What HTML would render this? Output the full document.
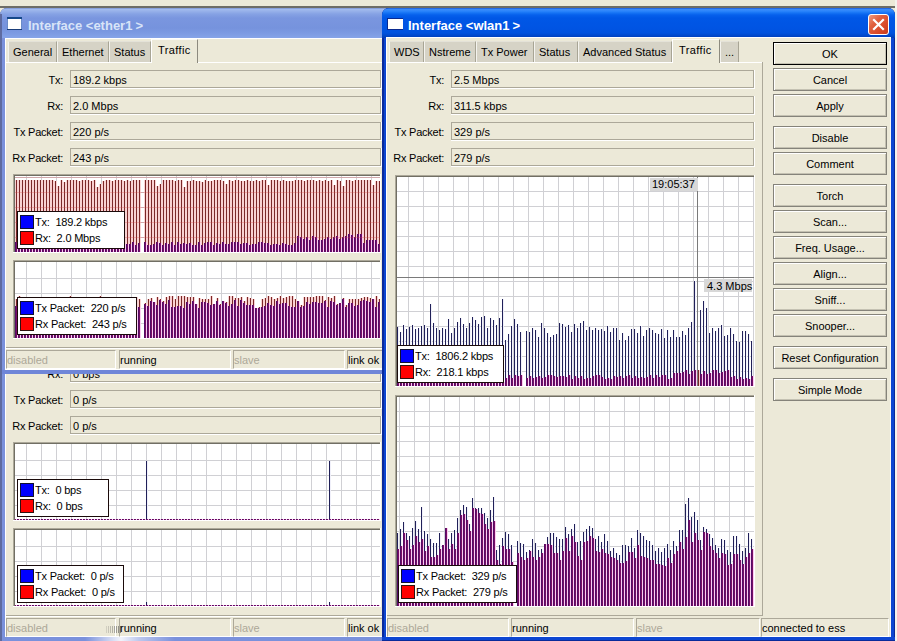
<!DOCTYPE html><html><head><meta charset="utf-8"><style>html,body{margin:0;padding:0;width:897px;height:641px;overflow:hidden;background:#ECE9D8;position:relative}</style></head><body><div style="position:absolute;left:0;top:0;width:897px;height:6px;background:#ECE9D8"></div>
<div style="position:absolute;left:0;top:6px;width:895px;height:2px;background:#6E6D66"></div>
<div style="position:absolute;left:895px;top:0;width:2px;height:641px;background:#F4F3EE"></div>
<div style="position:absolute;left:0px;top:276px;width:400px;height:365px;background:#7A91DC;border-radius:7px 7px 0 0;box-shadow:inset 2px 0 0 #5E6BA0, inset -1px 0 0 #5E6BA0, inset 0 -1px 0 #5E6BA0;"></div>
<div style="position:absolute;left:0px;top:276px;width:400px;height:30px;background:linear-gradient(to bottom,#6C84C8 0px,#A4BCEE 1px,#98B2EA 3px,#86A2E4 6px,#7A96DF 10px,#7693DD 20px,#7C9AE2 25px,#86A4E8 30px);border-radius:7px 7px 0 0;"></div>
<div style="position:absolute;left:5px;top:306px;width:395px;height:335px;background:#ECE9D8;"></div>
<div style="position:absolute;left:5px;top:306px;width:1px;height:335px;background:#FFFFFF;"></div>
<div style="position:absolute;left:2px;top:637px;width:400px;height:4px;background:#7A91DC;"></div>
<div style="position:absolute;left:5px;top:636px;width:395px;height:1px;background:#FFFFFF;"></div>
<div style="position:absolute;left:85px;top:636px;width:90px;height:5px;background:linear-gradient(to right,rgba(255,255,255,0) 0%,rgba(255,255,255,0.9) 40%,rgba(255,255,255,0.5) 60%,rgba(255,255,255,0) 100%);"></div>
<div style="position:absolute;left:106px;top:626px;width:1px;height:7px;background:rgba(60,60,60,0.15);"></div>
<div style="position:absolute;left:108px;top:626px;width:1px;height:7px;background:rgba(60,60,60,0.21);"></div>
<div style="position:absolute;left:110px;top:626px;width:1px;height:7px;background:rgba(60,60,60,0.27);"></div>
<div style="position:absolute;left:112px;top:626px;width:1px;height:7px;background:rgba(60,60,60,0.32999999999999996);"></div>
<div style="position:absolute;left:114px;top:626px;width:1px;height:7px;background:rgba(60,60,60,0.39);"></div>
<div style="position:absolute;left:116px;top:626px;width:1px;height:7px;background:rgba(60,60,60,0.44999999999999996);"></div>
<div style="position:absolute;left:118px;top:626px;width:1px;height:7px;background:rgba(60,60,60,0.51);"></div>
<div style="position:absolute;left:120px;top:626px;width:1px;height:7px;background:rgba(60,60,60,0.57);"></div>
<div style="position:absolute;right:834px;top:342.69px;font-family:'Liberation Sans',sans-serif;font-size:11px;line-height:11px;color:#000;font-weight:normal;white-space:nowrap;letter-spacing:-0.25px;">Tx:</div>
<div style="position:absolute;left:70px;top:338px;width:311px;height:18px;border:1px solid #ACA899;border-right-color:#ACA899;box-sizing:border-box;background:#ECE9D8;"></div>
<div style="position:absolute;left:70px;top:356px;width:312px;height:1px;background:#FFFFFF;"></div>
<div style="position:absolute;left:381px;top:338px;width:1px;height:19px;background:#FFFFFF;"></div>
<div style="position:absolute;left:73px;top:342.69px;font-family:'Liberation Sans',sans-serif;font-size:11px;line-height:11px;color:#000;font-weight:normal;white-space:nowrap;">0 bps</div>
<div style="position:absolute;right:834px;top:368.69px;font-family:'Liberation Sans',sans-serif;font-size:11px;line-height:11px;color:#000;font-weight:normal;white-space:nowrap;letter-spacing:-0.25px;">Rx:</div>
<div style="position:absolute;left:70px;top:364px;width:311px;height:18px;border:1px solid #ACA899;border-right-color:#ACA899;box-sizing:border-box;background:#ECE9D8;"></div>
<div style="position:absolute;left:70px;top:382px;width:312px;height:1px;background:#FFFFFF;"></div>
<div style="position:absolute;left:381px;top:364px;width:1px;height:19px;background:#FFFFFF;"></div>
<div style="position:absolute;left:73px;top:368.69px;font-family:'Liberation Sans',sans-serif;font-size:11px;line-height:11px;color:#000;font-weight:normal;white-space:nowrap;">0 bps</div>
<div style="position:absolute;right:834px;top:394.69px;font-family:'Liberation Sans',sans-serif;font-size:11px;line-height:11px;color:#000;font-weight:normal;white-space:nowrap;letter-spacing:-0.25px;">Tx Packet:</div>
<div style="position:absolute;left:70px;top:390px;width:311px;height:18px;border:1px solid #ACA899;border-right-color:#ACA899;box-sizing:border-box;background:#ECE9D8;"></div>
<div style="position:absolute;left:70px;top:408px;width:312px;height:1px;background:#FFFFFF;"></div>
<div style="position:absolute;left:381px;top:390px;width:1px;height:19px;background:#FFFFFF;"></div>
<div style="position:absolute;left:73px;top:394.69px;font-family:'Liberation Sans',sans-serif;font-size:11px;line-height:11px;color:#000;font-weight:normal;white-space:nowrap;">0 p/s</div>
<div style="position:absolute;right:834px;top:420.69px;font-family:'Liberation Sans',sans-serif;font-size:11px;line-height:11px;color:#000;font-weight:normal;white-space:nowrap;letter-spacing:-0.25px;">Rx Packet:</div>
<div style="position:absolute;left:70px;top:416px;width:311px;height:18px;border:1px solid #ACA899;border-right-color:#ACA899;box-sizing:border-box;background:#ECE9D8;"></div>
<div style="position:absolute;left:70px;top:434px;width:312px;height:1px;background:#FFFFFF;"></div>
<div style="position:absolute;left:381px;top:416px;width:1px;height:19px;background:#FFFFFF;"></div>
<div style="position:absolute;left:73px;top:420.69px;font-family:'Liberation Sans',sans-serif;font-size:11px;line-height:11px;color:#000;font-weight:normal;white-space:nowrap;">0 p/s</div>
<svg style="position:absolute;left:13px;top:442px" width="368" height="79" shape-rendering="crispEdges"><rect x="0" y="0" width="368" height="79" fill="#FFFFFF"/><path d="M13.5 2V79M28.5 2V79M43.5 2V79M58.5 2V79M73.5 2V79M88.5 2V79M103.5 2V79M118.5 2V79M133.5 2V79M148.5 2V79M163.5 2V79M178.5 2V79M193.5 2V79M208.5 2V79M223.5 2V79M238.5 2V79M253.5 2V79M268.5 2V79M283.5 2V79M298.5 2V79M313.5 2V79M328.5 2V79M343.5 2V79M358.5 2V79M2 18.5H368M2 33.5H368M2 48.5H368M2 63.5H368M2 78.5H368" stroke="#D0D0D4" stroke-width="1" fill="none"/><path d="M1 77h1v1h-1zM4 77h1v1h-1zM7 77h1v1h-1zM10 77h1v1h-1zM13 77h1v1h-1zM16 77h1v1h-1zM19 77h1v1h-1zM22 77h1v1h-1zM25 77h1v1h-1zM28 77h1v1h-1zM31 77h1v1h-1zM34 77h1v1h-1zM37 77h1v1h-1zM40 77h1v1h-1zM43 77h1v1h-1zM46 77h1v1h-1zM49 77h1v1h-1zM52 77h1v1h-1zM55 77h1v1h-1zM58 77h1v1h-1zM61 77h1v1h-1zM64 77h1v1h-1zM67 77h1v1h-1zM70 77h1v1h-1zM73 77h1v1h-1zM76 77h1v1h-1zM79 77h1v1h-1zM82 77h1v1h-1zM85 77h1v1h-1zM88 77h1v1h-1zM91 77h1v1h-1zM94 77h1v1h-1zM97 77h1v1h-1zM100 77h1v1h-1zM103 77h1v1h-1zM106 77h1v1h-1zM109 77h1v1h-1zM112 77h1v1h-1zM115 77h1v1h-1zM118 77h1v1h-1zM121 77h1v1h-1zM124 77h1v1h-1zM127 77h1v1h-1zM130 77h1v1h-1zM133 77h1v1h-1zM136 77h1v1h-1zM139 77h1v1h-1zM142 77h1v1h-1zM145 77h1v1h-1zM148 77h1v1h-1zM151 77h1v1h-1zM154 77h1v1h-1zM157 77h1v1h-1zM160 77h1v1h-1zM163 77h1v1h-1zM166 77h1v1h-1zM169 77h1v1h-1zM172 77h1v1h-1zM175 77h1v1h-1zM178 77h1v1h-1zM181 77h1v1h-1zM184 77h1v1h-1zM187 77h1v1h-1zM190 77h1v1h-1zM193 77h1v1h-1zM196 77h1v1h-1zM199 77h1v1h-1zM202 77h1v1h-1zM205 77h1v1h-1zM208 77h1v1h-1zM211 77h1v1h-1zM214 77h1v1h-1zM217 77h1v1h-1zM220 77h1v1h-1zM223 77h1v1h-1zM226 77h1v1h-1zM229 77h1v1h-1zM232 77h1v1h-1zM235 77h1v1h-1zM238 77h1v1h-1zM241 77h1v1h-1zM244 77h1v1h-1zM247 77h1v1h-1zM250 77h1v1h-1zM253 77h1v1h-1zM256 77h1v1h-1zM259 77h1v1h-1zM262 77h1v1h-1zM265 77h1v1h-1zM268 77h1v1h-1zM271 77h1v1h-1zM274 77h1v1h-1zM277 77h1v1h-1zM280 77h1v1h-1zM283 77h1v1h-1zM286 77h1v1h-1zM289 77h1v1h-1zM292 77h1v1h-1zM295 77h1v1h-1zM298 77h1v1h-1zM301 77h1v1h-1zM304 77h1v1h-1zM307 77h1v1h-1zM310 77h1v1h-1zM313 77h1v1h-1zM316 77h1v1h-1zM319 77h1v1h-1zM322 77h1v1h-1zM325 77h1v1h-1zM328 77h1v1h-1zM331 77h1v1h-1zM334 77h1v1h-1zM337 77h1v1h-1zM340 77h1v1h-1zM343 77h1v1h-1zM346 77h1v1h-1zM349 77h1v1h-1zM352 77h1v1h-1zM355 77h1v1h-1zM358 77h1v1h-1zM361 77h1v1h-1zM364 77h1v1h-1z" fill="#520C66"/><path d="M2 77h1v1h-1zM5 77h1v1h-1zM8 77h1v1h-1zM11 77h1v1h-1zM14 77h1v1h-1zM17 77h1v1h-1zM20 77h1v1h-1zM23 77h1v1h-1zM26 77h1v1h-1zM29 77h1v1h-1zM32 77h1v1h-1zM35 77h1v1h-1zM38 77h1v1h-1zM41 77h1v1h-1zM44 77h1v1h-1zM47 77h1v1h-1zM50 77h1v1h-1zM53 77h1v1h-1zM56 77h1v1h-1zM59 77h1v1h-1zM62 77h1v1h-1zM65 77h1v1h-1zM68 77h1v1h-1zM71 77h1v1h-1zM74 77h1v1h-1zM77 77h1v1h-1zM80 77h1v1h-1zM83 77h1v1h-1zM86 77h1v1h-1zM89 77h1v1h-1zM92 77h1v1h-1zM95 77h1v1h-1zM98 77h1v1h-1zM101 77h1v1h-1zM104 77h1v1h-1zM107 77h1v1h-1zM110 77h1v1h-1zM113 77h1v1h-1zM116 77h1v1h-1zM119 77h1v1h-1zM122 77h1v1h-1zM125 77h1v1h-1zM128 77h1v1h-1zM131 77h1v1h-1zM134 77h1v1h-1zM137 77h1v1h-1zM140 77h1v1h-1zM143 77h1v1h-1zM146 77h1v1h-1zM149 77h1v1h-1zM152 77h1v1h-1zM155 77h1v1h-1zM158 77h1v1h-1zM161 77h1v1h-1zM164 77h1v1h-1zM167 77h1v1h-1zM170 77h1v1h-1zM173 77h1v1h-1zM176 77h1v1h-1zM179 77h1v1h-1zM182 77h1v1h-1zM185 77h1v1h-1zM188 77h1v1h-1zM191 77h1v1h-1zM194 77h1v1h-1zM197 77h1v1h-1zM200 77h1v1h-1zM203 77h1v1h-1zM206 77h1v1h-1zM209 77h1v1h-1zM212 77h1v1h-1zM215 77h1v1h-1zM218 77h1v1h-1zM221 77h1v1h-1zM224 77h1v1h-1zM227 77h1v1h-1zM230 77h1v1h-1zM233 77h1v1h-1zM236 77h1v1h-1zM239 77h1v1h-1zM242 77h1v1h-1zM245 77h1v1h-1zM248 77h1v1h-1zM251 77h1v1h-1zM254 77h1v1h-1zM257 77h1v1h-1zM260 77h1v1h-1zM263 77h1v1h-1zM266 77h1v1h-1zM269 77h1v1h-1zM272 77h1v1h-1zM275 77h1v1h-1zM278 77h1v1h-1zM281 77h1v1h-1zM284 77h1v1h-1zM287 77h1v1h-1zM290 77h1v1h-1zM293 77h1v1h-1zM296 77h1v1h-1zM299 77h1v1h-1zM302 77h1v1h-1zM305 77h1v1h-1zM308 77h1v1h-1zM311 77h1v1h-1zM314 77h1v1h-1zM317 77h1v1h-1zM320 77h1v1h-1zM323 77h1v1h-1zM326 77h1v1h-1zM329 77h1v1h-1zM332 77h1v1h-1zM335 77h1v1h-1zM338 77h1v1h-1zM341 77h1v1h-1zM344 77h1v1h-1zM347 77h1v1h-1zM350 77h1v1h-1zM353 77h1v1h-1zM356 77h1v1h-1zM359 77h1v1h-1zM362 77h1v1h-1zM365 77h1v1h-1z" fill="#780E64"/><path d="M3 77h1v1h-1zM6 77h1v1h-1zM9 77h1v1h-1zM12 77h1v1h-1zM15 77h1v1h-1zM18 77h1v1h-1zM21 77h1v1h-1zM24 77h1v1h-1zM27 77h1v1h-1zM30 77h1v1h-1zM33 77h1v1h-1zM36 77h1v1h-1zM39 77h1v1h-1zM42 77h1v1h-1zM45 77h1v1h-1zM48 77h1v1h-1zM51 77h1v1h-1zM54 77h1v1h-1zM57 77h1v1h-1zM60 77h1v1h-1zM63 77h1v1h-1zM66 77h1v1h-1zM69 77h1v1h-1zM72 77h1v1h-1zM75 77h1v1h-1zM78 77h1v1h-1zM81 77h1v1h-1zM84 77h1v1h-1zM87 77h1v1h-1zM90 77h1v1h-1zM93 77h1v1h-1zM96 77h1v1h-1zM99 77h1v1h-1zM102 77h1v1h-1zM105 77h1v1h-1zM108 77h1v1h-1zM111 77h1v1h-1zM114 77h1v1h-1zM117 77h1v1h-1zM120 77h1v1h-1zM123 77h1v1h-1zM126 77h1v1h-1zM129 77h1v1h-1zM132 77h1v1h-1zM135 77h1v1h-1zM138 77h1v1h-1zM141 77h1v1h-1zM144 77h1v1h-1zM147 77h1v1h-1zM150 77h1v1h-1zM153 77h1v1h-1zM156 77h1v1h-1zM159 77h1v1h-1zM162 77h1v1h-1zM165 77h1v1h-1zM168 77h1v1h-1zM171 77h1v1h-1zM174 77h1v1h-1zM177 77h1v1h-1zM180 77h1v1h-1zM183 77h1v1h-1zM186 77h1v1h-1zM189 77h1v1h-1zM192 77h1v1h-1zM195 77h1v1h-1zM198 77h1v1h-1zM201 77h1v1h-1zM204 77h1v1h-1zM207 77h1v1h-1zM210 77h1v1h-1zM213 77h1v1h-1zM216 77h1v1h-1zM219 77h1v1h-1zM222 77h1v1h-1zM225 77h1v1h-1zM228 77h1v1h-1zM231 77h1v1h-1zM234 77h1v1h-1zM237 77h1v1h-1zM240 77h1v1h-1zM243 77h1v1h-1zM246 77h1v1h-1zM249 77h1v1h-1zM252 77h1v1h-1zM255 77h1v1h-1zM258 77h1v1h-1zM261 77h1v1h-1zM264 77h1v1h-1zM267 77h1v1h-1zM270 77h1v1h-1zM273 77h1v1h-1zM276 77h1v1h-1zM279 77h1v1h-1zM282 77h1v1h-1zM285 77h1v1h-1zM288 77h1v1h-1zM291 77h1v1h-1zM294 77h1v1h-1zM297 77h1v1h-1zM300 77h1v1h-1zM303 77h1v1h-1zM306 77h1v1h-1zM309 77h1v1h-1zM312 77h1v1h-1zM315 77h1v1h-1zM318 77h1v1h-1zM321 77h1v1h-1zM324 77h1v1h-1zM327 77h1v1h-1zM330 77h1v1h-1zM333 77h1v1h-1zM336 77h1v1h-1zM339 77h1v1h-1zM342 77h1v1h-1zM345 77h1v1h-1zM348 77h1v1h-1zM351 77h1v1h-1zM354 77h1v1h-1zM357 77h1v1h-1zM360 77h1v1h-1zM363 77h1v1h-1zM366 77h1v1h-1z" fill="#FCCCF2"/><path d="M133 19h1v58h-1zM316 19h1v58h-1z" fill="#202058"/><path d="M134 19h1v58h-1zM317 19h1v58h-1z" fill="#F0F0FA"/><path d="M0 0.5H368M0.5 0V79" stroke="#ACA899" fill="none"/><path d="M1 1.5H367M1.5 1V78" stroke="#716F64" fill="none"/><path d="M0 78.5H368M367.5 0V79" stroke="#FFFFFF" fill="none"/></svg>
<div style="position:absolute;left:17px;top:479px;width:92px;height:38px;background:#FFF;border:1px solid #1A0A0A;box-sizing:border-box;"></div>
<div style="position:absolute;left:20px;top:483px;width:14px;height:14px;background:#0000FF;border:1px solid #101030;box-sizing:border-box;"></div>
<div style="position:absolute;left:20px;top:499px;width:14px;height:14px;background:#FF0000;border:1px solid #301010;box-sizing:border-box;"></div>
<div style="position:absolute;left:35px;top:484.69px;font-family:'Liberation Sans',sans-serif;font-size:11px;line-height:11px;color:#000;font-weight:normal;white-space:nowrap;letter-spacing:-0.2px;">Tx:&nbsp; 0 bps</div>
<div style="position:absolute;left:35px;top:500.69px;font-family:'Liberation Sans',sans-serif;font-size:11px;line-height:11px;color:#000;font-weight:normal;white-space:nowrap;letter-spacing:-0.2px;">Rx:&nbsp; 0 bps</div>
<svg style="position:absolute;left:13px;top:528px" width="368" height="79" shape-rendering="crispEdges"><rect x="0" y="0" width="368" height="79" fill="#FFFFFF"/><path d="M13.5 2V79M28.5 2V79M43.5 2V79M58.5 2V79M73.5 2V79M88.5 2V79M103.5 2V79M118.5 2V79M133.5 2V79M148.5 2V79M163.5 2V79M178.5 2V79M193.5 2V79M208.5 2V79M223.5 2V79M238.5 2V79M253.5 2V79M268.5 2V79M283.5 2V79M298.5 2V79M313.5 2V79M328.5 2V79M343.5 2V79M358.5 2V79M2 18.5H368M2 33.5H368M2 48.5H368M2 63.5H368M2 78.5H368" stroke="#D0D0D4" stroke-width="1" fill="none"/><path d="M1 77h1v1h-1zM4 77h1v1h-1zM7 77h1v1h-1zM10 77h1v1h-1zM13 77h1v1h-1zM16 77h1v1h-1zM19 77h1v1h-1zM22 77h1v1h-1zM25 77h1v1h-1zM28 77h1v1h-1zM31 77h1v1h-1zM34 77h1v1h-1zM37 77h1v1h-1zM40 77h1v1h-1zM43 77h1v1h-1zM46 77h1v1h-1zM49 77h1v1h-1zM52 77h1v1h-1zM55 77h1v1h-1zM58 77h1v1h-1zM61 77h1v1h-1zM64 77h1v1h-1zM67 77h1v1h-1zM70 77h1v1h-1zM73 77h1v1h-1zM76 77h1v1h-1zM79 77h1v1h-1zM82 77h1v1h-1zM85 77h1v1h-1zM88 77h1v1h-1zM91 77h1v1h-1zM94 77h1v1h-1zM97 77h1v1h-1zM100 77h1v1h-1zM103 77h1v1h-1zM106 77h1v1h-1zM109 77h1v1h-1zM112 77h1v1h-1zM115 77h1v1h-1zM118 77h1v1h-1zM121 77h1v1h-1zM124 77h1v1h-1zM127 77h1v1h-1zM130 77h1v1h-1zM133 77h1v1h-1zM136 77h1v1h-1zM139 77h1v1h-1zM142 77h1v1h-1zM145 77h1v1h-1zM148 77h1v1h-1zM151 77h1v1h-1zM154 77h1v1h-1zM157 77h1v1h-1zM160 77h1v1h-1zM163 77h1v1h-1zM166 77h1v1h-1zM169 77h1v1h-1zM172 77h1v1h-1zM175 77h1v1h-1zM178 77h1v1h-1zM181 77h1v1h-1zM184 77h1v1h-1zM187 77h1v1h-1zM190 77h1v1h-1zM193 77h1v1h-1zM196 77h1v1h-1zM199 77h1v1h-1zM202 77h1v1h-1zM205 77h1v1h-1zM208 77h1v1h-1zM211 77h1v1h-1zM214 77h1v1h-1zM217 77h1v1h-1zM220 77h1v1h-1zM223 77h1v1h-1zM226 77h1v1h-1zM229 77h1v1h-1zM232 77h1v1h-1zM235 77h1v1h-1zM238 77h1v1h-1zM241 77h1v1h-1zM244 77h1v1h-1zM247 77h1v1h-1zM250 77h1v1h-1zM253 77h1v1h-1zM256 77h1v1h-1zM259 77h1v1h-1zM262 77h1v1h-1zM265 77h1v1h-1zM268 77h1v1h-1zM271 77h1v1h-1zM274 77h1v1h-1zM277 77h1v1h-1zM280 77h1v1h-1zM283 77h1v1h-1zM286 77h1v1h-1zM289 77h1v1h-1zM292 77h1v1h-1zM295 77h1v1h-1zM298 77h1v1h-1zM301 77h1v1h-1zM304 77h1v1h-1zM307 77h1v1h-1zM310 77h1v1h-1zM313 77h1v1h-1zM316 77h1v1h-1zM319 77h1v1h-1zM322 77h1v1h-1zM325 77h1v1h-1zM328 77h1v1h-1zM331 77h1v1h-1zM334 77h1v1h-1zM337 77h1v1h-1zM340 77h1v1h-1zM343 77h1v1h-1zM346 77h1v1h-1zM349 77h1v1h-1zM352 77h1v1h-1zM355 77h1v1h-1zM358 77h1v1h-1zM361 77h1v1h-1zM364 77h1v1h-1z" fill="#520C66"/><path d="M2 77h1v1h-1zM5 77h1v1h-1zM8 77h1v1h-1zM11 77h1v1h-1zM14 77h1v1h-1zM17 77h1v1h-1zM20 77h1v1h-1zM23 77h1v1h-1zM26 77h1v1h-1zM29 77h1v1h-1zM32 77h1v1h-1zM35 77h1v1h-1zM38 77h1v1h-1zM41 77h1v1h-1zM44 77h1v1h-1zM47 77h1v1h-1zM50 77h1v1h-1zM53 77h1v1h-1zM56 77h1v1h-1zM59 77h1v1h-1zM62 77h1v1h-1zM65 77h1v1h-1zM68 77h1v1h-1zM71 77h1v1h-1zM74 77h1v1h-1zM77 77h1v1h-1zM80 77h1v1h-1zM83 77h1v1h-1zM86 77h1v1h-1zM89 77h1v1h-1zM92 77h1v1h-1zM95 77h1v1h-1zM98 77h1v1h-1zM101 77h1v1h-1zM104 77h1v1h-1zM107 77h1v1h-1zM110 77h1v1h-1zM113 77h1v1h-1zM116 77h1v1h-1zM119 77h1v1h-1zM122 77h1v1h-1zM125 77h1v1h-1zM128 77h1v1h-1zM131 77h1v1h-1zM134 77h1v1h-1zM137 77h1v1h-1zM140 77h1v1h-1zM143 77h1v1h-1zM146 77h1v1h-1zM149 77h1v1h-1zM152 77h1v1h-1zM155 77h1v1h-1zM158 77h1v1h-1zM161 77h1v1h-1zM164 77h1v1h-1zM167 77h1v1h-1zM170 77h1v1h-1zM173 77h1v1h-1zM176 77h1v1h-1zM179 77h1v1h-1zM182 77h1v1h-1zM185 77h1v1h-1zM188 77h1v1h-1zM191 77h1v1h-1zM194 77h1v1h-1zM197 77h1v1h-1zM200 77h1v1h-1zM203 77h1v1h-1zM206 77h1v1h-1zM209 77h1v1h-1zM212 77h1v1h-1zM215 77h1v1h-1zM218 77h1v1h-1zM221 77h1v1h-1zM224 77h1v1h-1zM227 77h1v1h-1zM230 77h1v1h-1zM233 77h1v1h-1zM236 77h1v1h-1zM239 77h1v1h-1zM242 77h1v1h-1zM245 77h1v1h-1zM248 77h1v1h-1zM251 77h1v1h-1zM254 77h1v1h-1zM257 77h1v1h-1zM260 77h1v1h-1zM263 77h1v1h-1zM266 77h1v1h-1zM269 77h1v1h-1zM272 77h1v1h-1zM275 77h1v1h-1zM278 77h1v1h-1zM281 77h1v1h-1zM284 77h1v1h-1zM287 77h1v1h-1zM290 77h1v1h-1zM293 77h1v1h-1zM296 77h1v1h-1zM299 77h1v1h-1zM302 77h1v1h-1zM305 77h1v1h-1zM308 77h1v1h-1zM311 77h1v1h-1zM314 77h1v1h-1zM317 77h1v1h-1zM320 77h1v1h-1zM323 77h1v1h-1zM326 77h1v1h-1zM329 77h1v1h-1zM332 77h1v1h-1zM335 77h1v1h-1zM338 77h1v1h-1zM341 77h1v1h-1zM344 77h1v1h-1zM347 77h1v1h-1zM350 77h1v1h-1zM353 77h1v1h-1zM356 77h1v1h-1zM359 77h1v1h-1zM362 77h1v1h-1zM365 77h1v1h-1z" fill="#780E64"/><path d="M3 77h1v1h-1zM6 77h1v1h-1zM9 77h1v1h-1zM12 77h1v1h-1zM15 77h1v1h-1zM18 77h1v1h-1zM21 77h1v1h-1zM24 77h1v1h-1zM27 77h1v1h-1zM30 77h1v1h-1zM33 77h1v1h-1zM36 77h1v1h-1zM39 77h1v1h-1zM42 77h1v1h-1zM45 77h1v1h-1zM48 77h1v1h-1zM51 77h1v1h-1zM54 77h1v1h-1zM57 77h1v1h-1zM60 77h1v1h-1zM63 77h1v1h-1zM66 77h1v1h-1zM69 77h1v1h-1zM72 77h1v1h-1zM75 77h1v1h-1zM78 77h1v1h-1zM81 77h1v1h-1zM84 77h1v1h-1zM87 77h1v1h-1zM90 77h1v1h-1zM93 77h1v1h-1zM96 77h1v1h-1zM99 77h1v1h-1zM102 77h1v1h-1zM105 77h1v1h-1zM108 77h1v1h-1zM111 77h1v1h-1zM114 77h1v1h-1zM117 77h1v1h-1zM120 77h1v1h-1zM123 77h1v1h-1zM126 77h1v1h-1zM129 77h1v1h-1zM132 77h1v1h-1zM135 77h1v1h-1zM138 77h1v1h-1zM141 77h1v1h-1zM144 77h1v1h-1zM147 77h1v1h-1zM150 77h1v1h-1zM153 77h1v1h-1zM156 77h1v1h-1zM159 77h1v1h-1zM162 77h1v1h-1zM165 77h1v1h-1zM168 77h1v1h-1zM171 77h1v1h-1zM174 77h1v1h-1zM177 77h1v1h-1zM180 77h1v1h-1zM183 77h1v1h-1zM186 77h1v1h-1zM189 77h1v1h-1zM192 77h1v1h-1zM195 77h1v1h-1zM198 77h1v1h-1zM201 77h1v1h-1zM204 77h1v1h-1zM207 77h1v1h-1zM210 77h1v1h-1zM213 77h1v1h-1zM216 77h1v1h-1zM219 77h1v1h-1zM222 77h1v1h-1zM225 77h1v1h-1zM228 77h1v1h-1zM231 77h1v1h-1zM234 77h1v1h-1zM237 77h1v1h-1zM240 77h1v1h-1zM243 77h1v1h-1zM246 77h1v1h-1zM249 77h1v1h-1zM252 77h1v1h-1zM255 77h1v1h-1zM258 77h1v1h-1zM261 77h1v1h-1zM264 77h1v1h-1zM267 77h1v1h-1zM270 77h1v1h-1zM273 77h1v1h-1zM276 77h1v1h-1zM279 77h1v1h-1zM282 77h1v1h-1zM285 77h1v1h-1zM288 77h1v1h-1zM291 77h1v1h-1zM294 77h1v1h-1zM297 77h1v1h-1zM300 77h1v1h-1zM303 77h1v1h-1zM306 77h1v1h-1zM309 77h1v1h-1zM312 77h1v1h-1zM315 77h1v1h-1zM318 77h1v1h-1zM321 77h1v1h-1zM324 77h1v1h-1zM327 77h1v1h-1zM330 77h1v1h-1zM333 77h1v1h-1zM336 77h1v1h-1zM339 77h1v1h-1zM342 77h1v1h-1zM345 77h1v1h-1zM348 77h1v1h-1zM351 77h1v1h-1zM354 77h1v1h-1zM357 77h1v1h-1zM360 77h1v1h-1zM363 77h1v1h-1zM366 77h1v1h-1z" fill="#FCCCF2"/><path d="M133 74h1v3h-1zM316 74h1v3h-1z" fill="#202058"/><path d="M134 74h1v3h-1zM317 74h1v3h-1z" fill="#F0F0FA"/><path d="M0 0.5H368M0.5 0V79" stroke="#ACA899" fill="none"/><path d="M1 1.5H367M1.5 1V78" stroke="#716F64" fill="none"/><path d="M0 78.5H368M367.5 0V79" stroke="#FFFFFF" fill="none"/></svg>
<div style="position:absolute;left:17px;top:565px;width:107px;height:38px;background:#FFF;border:1px solid #1A0A0A;box-sizing:border-box;"></div>
<div style="position:absolute;left:20px;top:569px;width:14px;height:14px;background:#0000FF;border:1px solid #101030;box-sizing:border-box;"></div>
<div style="position:absolute;left:20px;top:585px;width:14px;height:14px;background:#FF0000;border:1px solid #301010;box-sizing:border-box;"></div>
<div style="position:absolute;left:35px;top:570.69px;font-family:'Liberation Sans',sans-serif;font-size:11px;line-height:11px;color:#000;font-weight:normal;white-space:nowrap;letter-spacing:-0.2px;">Tx Packet:&nbsp; 0 p/s</div>
<div style="position:absolute;left:35px;top:586.69px;font-family:'Liberation Sans',sans-serif;font-size:11px;line-height:11px;color:#000;font-weight:normal;white-space:nowrap;letter-spacing:-0.2px;">Rx Packet:&nbsp; 0 p/s</div>
<div style="position:absolute;left:6px;top:615px;width:380px;height:1px;background:#ACA899;"></div>
<div style="position:absolute;left:6px;top:616px;width:380px;height:1px;background:#FFFFFF;"></div>
<div style="position:absolute;left:6px;top:618px;width:110px;height:19px;border-top:1px solid #ACA899;border-left:1px solid #ACA899;box-sizing:border-box;border-right:1px solid #FFF;border-bottom:1px solid #FFF;"></div>
<div style="position:absolute;left:7px;top:622.69px;font-family:'Liberation Sans',sans-serif;font-size:11px;line-height:11px;color:#ACA899;font-weight:normal;white-space:nowrap;">disabled</div>
<div style="position:absolute;left:119px;top:618px;width:112px;height:19px;border-top:1px solid #ACA899;border-left:1px solid #ACA899;box-sizing:border-box;border-right:1px solid #FFF;border-bottom:1px solid #FFF;"></div>
<div style="position:absolute;left:120px;top:622.69px;font-family:'Liberation Sans',sans-serif;font-size:11px;line-height:11px;color:#000;font-weight:normal;white-space:nowrap;">running</div>
<div style="position:absolute;left:233px;top:618px;width:112px;height:19px;border-top:1px solid #ACA899;border-left:1px solid #ACA899;box-sizing:border-box;border-right:1px solid #FFF;border-bottom:1px solid #FFF;"></div>
<div style="position:absolute;left:234px;top:622.69px;font-family:'Liberation Sans',sans-serif;font-size:11px;line-height:11px;color:#ACA899;font-weight:normal;white-space:nowrap;">slave</div>
<div style="position:absolute;left:347px;top:618px;width:40px;height:19px;border-top:1px solid #ACA899;border-left:1px solid #ACA899;box-sizing:border-box;border-right:1px solid #FFF;border-bottom:1px solid #FFF;"></div>
<div style="position:absolute;left:348px;top:622.69px;font-family:'Liberation Sans',sans-serif;font-size:11px;line-height:11px;color:#000;font-weight:normal;white-space:nowrap;">link ok</div>
<div style="position:absolute;left:0px;top:8px;width:400px;height:366px;background:#7A91DC;border-radius:7px 7px 0 0;box-shadow:inset 2px 0 0 #5E6BA0, inset -1px 0 0 #5E6BA0, inset 0 -1px 0 #5E6BA0;"></div>
<div style="position:absolute;left:0px;top:8px;width:400px;height:30px;background:linear-gradient(to bottom,#6C84C8 0px,#A4BCEE 1px,#98B2EA 3px,#86A2E4 6px,#7A96DF 10px,#7693DD 20px,#7C9AE2 25px,#86A4E8 30px);border-radius:7px 7px 0 0;"></div>
<div style="position:absolute;left:5px;top:38px;width:395px;height:332px;background:#ECE9D8;"></div>
<div style="position:absolute;left:5px;top:38px;width:395px;height:1px;background:#FFFFFF;"></div>
<div style="position:absolute;left:5px;top:38px;width:1px;height:332px;background:#FFFFFF;"></div>
<div style="position:absolute;left:7px;top:17px;width:15px;height:13px;background:#FFFFFF;box-shadow:inset 0 2px 0 #15488A, inset 0 -1px 0 #1A3E7A, inset 1px 0 0 #6A8CC8, inset -1px 0 0 #6A8CC8;"></div>
<div style="position:absolute;left:0px;top:14px;width:2px;height:24px;background:#5E6BA0;"></div>
<div style="position:absolute;left:28px;top:19.0px;font-family:'Liberation Sans',sans-serif;font-size:13px;line-height:13px;color:#D8E4F8;font-weight:bold;white-space:nowrap;">Interface &lt;ether1<span style="margin-left:3px">&gt;</span></div>
<div style="position:absolute;left:6px;top:62px;width:390px;height:1px;background:#FFFFFF;"></div>
<div style="position:absolute;left:8px;top:41px;width:49px;height:21px;background:#D6D3C6;border-left:1px solid #F4F3EE;border-top:1px solid #E4E2D8;border-right:1px solid #A8A595;box-sizing:border-box;"></div>
<div style="position:absolute;left:13px;top:46.69px;font-family:'Liberation Sans',sans-serif;font-size:11px;line-height:11px;color:#000;font-weight:normal;white-space:nowrap;">General</div>
<div style="position:absolute;left:57px;top:41px;width:52px;height:21px;background:#D6D3C6;border-left:1px solid #F4F3EE;border-top:1px solid #E4E2D8;border-right:1px solid #A8A595;box-sizing:border-box;"></div>
<div style="position:absolute;left:62px;top:46.69px;font-family:'Liberation Sans',sans-serif;font-size:11px;line-height:11px;color:#000;font-weight:normal;white-space:nowrap;">Ethernet</div>
<div style="position:absolute;left:109px;top:41px;width:42px;height:21px;background:#D6D3C6;border-left:1px solid #F4F3EE;border-top:1px solid #E4E2D8;border-right:1px solid #A8A595;box-sizing:border-box;"></div>
<div style="position:absolute;left:114px;top:46.69px;font-family:'Liberation Sans',sans-serif;font-size:11px;line-height:11px;color:#000;font-weight:normal;white-space:nowrap;">Status</div>
<div style="position:absolute;left:151px;top:39px;width:47px;height:24px;background:#ECE9D8;border-left:1px solid #FFFFFF;border-top:1px solid #FAFAF6;border-right:1px solid #8D8A7E;box-sizing:border-box;"></div>
<div style="position:absolute;left:158px;top:44.69px;font-family:'Liberation Sans',sans-serif;font-size:11px;line-height:11px;color:#000;font-weight:normal;white-space:nowrap;letter-spacing:0.4px;">Traffic</div>
<div style="position:absolute;right:834px;top:74.69px;font-family:'Liberation Sans',sans-serif;font-size:11px;line-height:11px;color:#000;font-weight:normal;white-space:nowrap;letter-spacing:-0.25px;">Tx:</div>
<div style="position:absolute;left:70px;top:70px;width:311px;height:18px;border:1px solid #ACA899;border-right-color:#ACA899;box-sizing:border-box;background:#ECE9D8;"></div>
<div style="position:absolute;left:70px;top:88px;width:312px;height:1px;background:#FFFFFF;"></div>
<div style="position:absolute;left:381px;top:70px;width:1px;height:19px;background:#FFFFFF;"></div>
<div style="position:absolute;left:73px;top:74.69px;font-family:'Liberation Sans',sans-serif;font-size:11px;line-height:11px;color:#000;font-weight:normal;white-space:nowrap;">189.2 kbps</div>
<div style="position:absolute;right:834px;top:100.69px;font-family:'Liberation Sans',sans-serif;font-size:11px;line-height:11px;color:#000;font-weight:normal;white-space:nowrap;letter-spacing:-0.25px;">Rx:</div>
<div style="position:absolute;left:70px;top:96px;width:311px;height:18px;border:1px solid #ACA899;border-right-color:#ACA899;box-sizing:border-box;background:#ECE9D8;"></div>
<div style="position:absolute;left:70px;top:114px;width:312px;height:1px;background:#FFFFFF;"></div>
<div style="position:absolute;left:381px;top:96px;width:1px;height:19px;background:#FFFFFF;"></div>
<div style="position:absolute;left:73px;top:100.69px;font-family:'Liberation Sans',sans-serif;font-size:11px;line-height:11px;color:#000;font-weight:normal;white-space:nowrap;">2.0 Mbps</div>
<div style="position:absolute;right:834px;top:126.69px;font-family:'Liberation Sans',sans-serif;font-size:11px;line-height:11px;color:#000;font-weight:normal;white-space:nowrap;letter-spacing:-0.25px;">Tx Packet:</div>
<div style="position:absolute;left:70px;top:122px;width:311px;height:18px;border:1px solid #ACA899;border-right-color:#ACA899;box-sizing:border-box;background:#ECE9D8;"></div>
<div style="position:absolute;left:70px;top:140px;width:312px;height:1px;background:#FFFFFF;"></div>
<div style="position:absolute;left:381px;top:122px;width:1px;height:19px;background:#FFFFFF;"></div>
<div style="position:absolute;left:73px;top:126.69px;font-family:'Liberation Sans',sans-serif;font-size:11px;line-height:11px;color:#000;font-weight:normal;white-space:nowrap;">220 p/s</div>
<div style="position:absolute;right:834px;top:152.69px;font-family:'Liberation Sans',sans-serif;font-size:11px;line-height:11px;color:#000;font-weight:normal;white-space:nowrap;letter-spacing:-0.25px;">Rx Packet:</div>
<div style="position:absolute;left:70px;top:148px;width:311px;height:18px;border:1px solid #ACA899;border-right-color:#ACA899;box-sizing:border-box;background:#ECE9D8;"></div>
<div style="position:absolute;left:70px;top:166px;width:312px;height:1px;background:#FFFFFF;"></div>
<div style="position:absolute;left:381px;top:148px;width:1px;height:19px;background:#FFFFFF;"></div>
<div style="position:absolute;left:73px;top:152.69px;font-family:'Liberation Sans',sans-serif;font-size:11px;line-height:11px;color:#000;font-weight:normal;white-space:nowrap;">243 p/s</div>
<svg style="position:absolute;left:13px;top:174px" width="368" height="79" shape-rendering="crispEdges"><rect x="0" y="0" width="368" height="79" fill="#FFFFFF"/><path d="M13.5 2V79M28.5 2V79M43.5 2V79M58.5 2V79M73.5 2V79M88.5 2V79M103.5 2V79M118.5 2V79M133.5 2V79M148.5 2V79M163.5 2V79M178.5 2V79M193.5 2V79M208.5 2V79M223.5 2V79M238.5 2V79M253.5 2V79M268.5 2V79M283.5 2V79M298.5 2V79M313.5 2V79M328.5 2V79M343.5 2V79M358.5 2V79M2 3.5H368M2 18.5H368M2 33.5H368M2 48.5H368M2 63.5H368M2 78.5H368" stroke="#D0D0D4" stroke-width="1" fill="none"/><path d="M2 68h1v10h-1zM5 70h1v8h-1zM8 70h1v8h-1zM11 71h1v7h-1zM14 71h1v7h-1zM17 68h1v10h-1zM20 70h1v8h-1zM23 71h1v7h-1zM26 70h1v8h-1zM29 69h1v9h-1zM32 70h1v8h-1zM35 71h1v7h-1zM38 71h1v7h-1zM41 70h1v8h-1zM44 71h1v7h-1zM47 68h1v10h-1zM50 70h1v8h-1zM53 68h1v10h-1zM56 68h1v10h-1zM59 69h1v9h-1zM62 71h1v7h-1zM65 71h1v7h-1zM68 71h1v7h-1zM71 70h1v8h-1zM74 70h1v8h-1zM77 68h1v10h-1zM80 68h1v10h-1zM83 69h1v9h-1zM86 68h1v10h-1zM89 71h1v7h-1zM92 68h1v10h-1zM95 69h1v9h-1zM98 71h1v7h-1zM101 70h1v8h-1zM104 68h1v10h-1zM107 70h1v8h-1zM110 70h1v8h-1zM113 70h1v8h-1zM116 70h1v8h-1zM119 68h1v10h-1zM122 71h1v7h-1zM125 69h1v9h-1zM131 68h1v10h-1zM134 71h1v7h-1zM137 71h1v7h-1zM140 70h1v8h-1zM143 68h1v10h-1zM146 69h1v9h-1zM149 71h1v7h-1zM152 69h1v9h-1zM155 70h1v8h-1zM158 68h1v10h-1zM161 71h1v7h-1zM164 68h1v10h-1zM167 70h1v8h-1zM170 69h1v9h-1zM173 70h1v8h-1zM176 69h1v9h-1zM179 71h1v7h-1zM182 71h1v7h-1zM185 68h1v10h-1zM188 71h1v7h-1zM191 69h1v9h-1zM194 68h1v10h-1zM197 68h1v10h-1zM200 71h1v7h-1zM203 69h1v9h-1zM206 70h1v8h-1zM209 68h1v10h-1zM212 70h1v8h-1zM215 70h1v8h-1zM218 68h1v10h-1zM221 68h1v10h-1zM224 68h1v10h-1zM227 70h1v8h-1zM230 69h1v9h-1zM233 69h1v9h-1zM236 71h1v7h-1zM239 70h1v8h-1zM242 70h1v8h-1zM245 68h1v10h-1zM248 68h1v10h-1zM251 69h1v9h-1zM254 69h1v9h-1zM257 71h1v7h-1zM260 70h1v8h-1zM263 70h1v8h-1zM266 71h1v7h-1zM269 69h1v9h-1zM272 70h1v8h-1zM275 71h1v7h-1zM278 71h1v7h-1zM281 69h1v9h-1zM284 62h1v16h-1zM287 63h1v15h-1zM290 65h1v13h-1zM293 63h1v15h-1zM296 66h1v12h-1zM299 62h1v16h-1zM302 63h1v15h-1zM305 66h1v12h-1zM308 66h1v12h-1zM311 65h1v13h-1zM314 63h1v15h-1zM317 65h1v13h-1zM320 63h1v15h-1zM323 62h1v16h-1zM326 65h1v13h-1zM329 63h1v15h-1zM332 62h1v16h-1zM335 60h1v18h-1zM338 61h1v17h-1zM341 63h1v15h-1zM344 60h1v18h-1zM347 60h1v18h-1zM350 69h1v9h-1zM353 66h1v12h-1zM356 66h1v12h-1zM359 66h1v12h-1zM362 66h1v12h-1zM365 70h1v8h-1z" fill="#520C66"/><path d="M2 6h1v62h-1zM4 6h1v62h-1zM5 6h1v64h-1zM7 6h1v64h-1zM8 6h1v64h-1zM10 6h1v64h-1zM11 6h1v65h-1zM13 6h1v65h-1zM14 6h1v65h-1zM16 6h1v65h-1zM17 6h1v62h-1zM19 6h1v62h-1zM20 6h1v64h-1zM22 6h1v64h-1zM23 6h1v65h-1zM25 6h1v65h-1zM26 6h1v64h-1zM28 6h1v64h-1zM29 6h1v63h-1zM31 6h1v63h-1zM32 6h1v64h-1zM34 6h1v64h-1zM35 6h1v65h-1zM37 6h1v65h-1zM38 6h1v65h-1zM40 6h1v65h-1zM41 7h1v63h-1zM43 7h1v63h-1zM44 12h1v59h-1zM46 12h1v59h-1zM47 6h1v62h-1zM49 6h1v62h-1zM50 8h1v62h-1zM52 8h1v62h-1zM53 6h1v62h-1zM55 6h1v62h-1zM56 6h1v62h-1zM58 6h1v62h-1zM59 6h1v63h-1zM61 6h1v63h-1zM62 6h1v65h-1zM64 6h1v65h-1zM65 7h1v64h-1zM67 7h1v64h-1zM68 6h1v65h-1zM70 6h1v65h-1zM71 6h1v64h-1zM73 6h1v64h-1zM74 6h1v64h-1zM76 6h1v64h-1zM77 7h1v61h-1zM79 7h1v61h-1zM80 6h1v62h-1zM82 6h1v62h-1zM83 13h1v56h-1zM85 13h1v56h-1zM86 10h1v58h-1zM88 10h1v58h-1zM89 7h1v64h-1zM91 7h1v64h-1zM92 6h1v62h-1zM94 6h1v62h-1zM95 6h1v63h-1zM97 6h1v63h-1zM98 7h1v64h-1zM100 7h1v64h-1zM101 6h1v64h-1zM103 6h1v64h-1zM104 6h1v62h-1zM106 6h1v62h-1zM107 6h1v64h-1zM109 6h1v64h-1zM110 7h1v63h-1zM112 7h1v63h-1zM113 6h1v64h-1zM115 6h1v64h-1zM116 7h1v63h-1zM118 7h1v63h-1zM119 6h1v62h-1zM121 6h1v62h-1zM122 6h1v65h-1zM124 6h1v65h-1zM125 6h1v63h-1zM127 6h1v63h-1zM131 6h1v62h-1zM133 6h1v62h-1zM134 6h1v65h-1zM136 6h1v65h-1zM137 6h1v65h-1zM139 6h1v65h-1zM140 6h1v64h-1zM142 6h1v64h-1zM143 12h1v56h-1zM145 12h1v56h-1zM146 10h1v59h-1zM148 10h1v59h-1zM149 6h1v65h-1zM151 6h1v65h-1zM152 6h1v63h-1zM154 6h1v63h-1zM155 6h1v64h-1zM157 6h1v64h-1zM158 6h1v62h-1zM160 6h1v62h-1zM161 7h1v64h-1zM163 7h1v64h-1zM164 6h1v62h-1zM166 6h1v62h-1zM167 6h1v64h-1zM169 6h1v64h-1zM170 13h1v56h-1zM172 13h1v56h-1zM173 7h1v63h-1zM175 7h1v63h-1zM176 7h1v62h-1zM178 7h1v62h-1zM179 6h1v65h-1zM181 6h1v65h-1zM182 7h1v64h-1zM184 7h1v64h-1zM185 7h1v61h-1zM187 7h1v61h-1zM188 8h1v63h-1zM190 8h1v63h-1zM191 6h1v63h-1zM193 6h1v63h-1zM194 7h1v61h-1zM196 7h1v61h-1zM197 7h1v61h-1zM199 7h1v61h-1zM200 6h1v65h-1zM202 6h1v65h-1zM203 6h1v63h-1zM205 6h1v63h-1zM206 6h1v64h-1zM208 6h1v64h-1zM209 7h1v61h-1zM211 7h1v61h-1zM212 10h1v60h-1zM214 10h1v60h-1zM215 6h1v64h-1zM217 6h1v64h-1zM218 7h1v61h-1zM220 7h1v61h-1zM221 6h1v62h-1zM223 6h1v62h-1zM224 6h1v62h-1zM226 6h1v62h-1zM227 7h1v63h-1zM229 7h1v63h-1zM230 7h1v62h-1zM232 7h1v62h-1zM233 6h1v63h-1zM235 6h1v63h-1zM236 7h1v64h-1zM238 7h1v64h-1zM239 7h1v63h-1zM241 7h1v63h-1zM242 6h1v64h-1zM244 6h1v64h-1zM245 7h1v61h-1zM247 7h1v61h-1zM248 6h1v62h-1zM250 6h1v62h-1zM251 6h1v63h-1zM253 6h1v63h-1zM254 11h1v58h-1zM256 11h1v58h-1zM257 6h1v65h-1zM259 6h1v65h-1zM260 6h1v64h-1zM262 6h1v64h-1zM263 6h1v64h-1zM265 6h1v64h-1zM266 7h1v64h-1zM268 7h1v64h-1zM269 6h1v63h-1zM271 6h1v63h-1zM272 7h1v63h-1zM274 7h1v63h-1zM275 7h1v64h-1zM277 7h1v64h-1zM278 7h1v64h-1zM280 7h1v64h-1zM281 6h1v63h-1zM283 6h1v63h-1zM284 6h1v56h-1zM286 6h1v56h-1zM287 6h1v57h-1zM289 6h1v57h-1zM290 7h1v58h-1zM292 7h1v58h-1zM293 6h1v57h-1zM295 6h1v57h-1zM296 6h1v60h-1zM298 6h1v60h-1zM299 6h1v56h-1zM301 6h1v56h-1zM302 7h1v56h-1zM304 7h1v56h-1zM305 6h1v60h-1zM307 6h1v60h-1zM308 7h1v59h-1zM310 7h1v59h-1zM311 6h1v59h-1zM313 6h1v59h-1zM314 7h1v56h-1zM316 7h1v56h-1zM317 6h1v59h-1zM319 6h1v59h-1zM320 11h1v52h-1zM322 11h1v52h-1zM323 6h1v56h-1zM325 6h1v56h-1zM326 7h1v58h-1zM328 7h1v58h-1zM329 12h1v51h-1zM331 12h1v51h-1zM332 6h1v56h-1zM334 6h1v56h-1zM335 6h1v54h-1zM337 6h1v54h-1zM338 7h1v54h-1zM340 7h1v54h-1zM341 6h1v57h-1zM343 6h1v57h-1zM344 6h1v54h-1zM346 6h1v54h-1zM347 6h1v54h-1zM349 6h1v54h-1zM350 6h1v63h-1zM352 6h1v63h-1zM353 6h1v60h-1zM355 6h1v60h-1zM356 6h1v60h-1zM358 6h1v60h-1zM359 11h1v55h-1zM361 11h1v55h-1zM362 7h1v59h-1zM364 7h1v59h-1zM365 7h1v63h-1zM367 7h1v63h-1z" fill="#F9D2D2"/><path d="M3 68h1v10h-1zM6 70h1v8h-1zM9 70h1v8h-1zM12 71h1v7h-1zM15 71h1v7h-1zM18 68h1v10h-1zM21 70h1v8h-1zM24 71h1v7h-1zM27 70h1v8h-1zM30 69h1v9h-1zM33 70h1v8h-1zM36 71h1v7h-1zM39 71h1v7h-1zM42 70h1v8h-1zM45 71h1v7h-1zM48 68h1v10h-1zM51 70h1v8h-1zM54 68h1v10h-1zM57 68h1v10h-1zM60 69h1v9h-1zM63 71h1v7h-1zM66 71h1v7h-1zM69 71h1v7h-1zM72 70h1v8h-1zM75 70h1v8h-1zM78 68h1v10h-1zM81 68h1v10h-1zM84 69h1v9h-1zM87 68h1v10h-1zM90 71h1v7h-1zM93 68h1v10h-1zM96 69h1v9h-1zM99 71h1v7h-1zM102 70h1v8h-1zM105 68h1v10h-1zM108 70h1v8h-1zM111 70h1v8h-1zM114 70h1v8h-1zM117 70h1v8h-1zM120 68h1v10h-1zM123 71h1v7h-1zM126 69h1v9h-1zM132 68h1v10h-1zM135 71h1v7h-1zM138 71h1v7h-1zM141 70h1v8h-1zM144 68h1v10h-1zM147 69h1v9h-1zM150 71h1v7h-1zM153 69h1v9h-1zM156 70h1v8h-1zM159 68h1v10h-1zM162 71h1v7h-1zM165 68h1v10h-1zM168 70h1v8h-1zM171 69h1v9h-1zM174 70h1v8h-1zM177 69h1v9h-1zM180 71h1v7h-1zM183 71h1v7h-1zM186 68h1v10h-1zM189 71h1v7h-1zM192 69h1v9h-1zM195 68h1v10h-1zM198 68h1v10h-1zM201 71h1v7h-1zM204 69h1v9h-1zM207 70h1v8h-1zM210 68h1v10h-1zM213 70h1v8h-1zM216 70h1v8h-1zM219 68h1v10h-1zM222 68h1v10h-1zM225 68h1v10h-1zM228 70h1v8h-1zM231 69h1v9h-1zM234 69h1v9h-1zM237 71h1v7h-1zM240 70h1v8h-1zM243 70h1v8h-1zM246 68h1v10h-1zM249 68h1v10h-1zM252 69h1v9h-1zM255 69h1v9h-1zM258 71h1v7h-1zM261 70h1v8h-1zM264 70h1v8h-1zM267 71h1v7h-1zM270 69h1v9h-1zM273 70h1v8h-1zM276 71h1v7h-1zM279 71h1v7h-1zM282 69h1v9h-1zM285 62h1v16h-1zM288 63h1v15h-1zM291 65h1v13h-1zM294 63h1v15h-1zM297 66h1v12h-1zM300 62h1v16h-1zM303 63h1v15h-1zM306 66h1v12h-1zM309 66h1v12h-1zM312 65h1v13h-1zM315 63h1v15h-1zM318 65h1v13h-1zM321 63h1v15h-1zM324 62h1v16h-1zM327 65h1v13h-1zM330 63h1v15h-1zM333 62h1v16h-1zM336 60h1v18h-1zM339 61h1v17h-1zM342 63h1v15h-1zM345 60h1v18h-1zM348 60h1v18h-1zM351 69h1v9h-1zM354 66h1v12h-1zM357 66h1v12h-1zM360 66h1v12h-1zM363 66h1v12h-1zM366 70h1v8h-1z" fill="#780E64"/><path d="M3 6h1v62h-1zM6 6h1v64h-1zM9 6h1v64h-1zM12 6h1v65h-1zM15 6h1v65h-1zM18 6h1v62h-1zM21 6h1v64h-1zM24 6h1v65h-1zM27 6h1v64h-1zM30 6h1v63h-1zM33 6h1v64h-1zM36 6h1v65h-1zM39 6h1v65h-1zM42 7h1v63h-1zM45 12h1v59h-1zM48 6h1v62h-1zM51 8h1v62h-1zM54 6h1v62h-1zM57 6h1v62h-1zM60 6h1v63h-1zM63 6h1v65h-1zM66 7h1v64h-1zM69 6h1v65h-1zM72 6h1v64h-1zM75 6h1v64h-1zM78 7h1v61h-1zM81 6h1v62h-1zM84 13h1v56h-1zM87 10h1v58h-1zM90 7h1v64h-1zM93 6h1v62h-1zM96 6h1v63h-1zM99 7h1v64h-1zM102 6h1v64h-1zM105 6h1v62h-1zM108 6h1v64h-1zM111 7h1v63h-1zM114 6h1v64h-1zM117 7h1v63h-1zM120 6h1v62h-1zM123 6h1v65h-1zM126 6h1v63h-1zM132 6h1v62h-1zM135 6h1v65h-1zM138 6h1v65h-1zM141 6h1v64h-1zM144 12h1v56h-1zM147 10h1v59h-1zM150 6h1v65h-1zM153 6h1v63h-1zM156 6h1v64h-1zM159 6h1v62h-1zM162 7h1v64h-1zM165 6h1v62h-1zM168 6h1v64h-1zM171 13h1v56h-1zM174 7h1v63h-1zM177 7h1v62h-1zM180 6h1v65h-1zM183 7h1v64h-1zM186 7h1v61h-1zM189 8h1v63h-1zM192 6h1v63h-1zM195 7h1v61h-1zM198 7h1v61h-1zM201 6h1v65h-1zM204 6h1v63h-1zM207 6h1v64h-1zM210 7h1v61h-1zM213 10h1v60h-1zM216 6h1v64h-1zM219 7h1v61h-1zM222 6h1v62h-1zM225 6h1v62h-1zM228 7h1v63h-1zM231 7h1v62h-1zM234 6h1v63h-1zM237 7h1v64h-1zM240 7h1v63h-1zM243 6h1v64h-1zM246 7h1v61h-1zM249 6h1v62h-1zM252 6h1v63h-1zM255 11h1v58h-1zM258 6h1v65h-1zM261 6h1v64h-1zM264 6h1v64h-1zM267 7h1v64h-1zM270 6h1v63h-1zM273 7h1v63h-1zM276 7h1v64h-1zM279 7h1v64h-1zM282 6h1v63h-1zM285 6h1v56h-1zM288 6h1v57h-1zM291 7h1v58h-1zM294 6h1v57h-1zM297 6h1v60h-1zM300 6h1v56h-1zM303 7h1v56h-1zM306 6h1v60h-1zM309 7h1v59h-1zM312 6h1v59h-1zM315 7h1v56h-1zM318 6h1v59h-1zM321 11h1v52h-1zM324 6h1v56h-1zM327 7h1v58h-1zM330 12h1v51h-1zM333 6h1v56h-1zM336 6h1v54h-1zM339 7h1v54h-1zM342 6h1v57h-1zM345 6h1v54h-1zM348 6h1v54h-1zM351 6h1v63h-1zM354 6h1v60h-1zM357 6h1v60h-1zM360 11h1v55h-1zM363 7h1v59h-1zM366 7h1v63h-1z" fill="#7A2828"/><path d="M4 68h1v10h-1zM7 70h1v8h-1zM10 70h1v8h-1zM13 71h1v7h-1zM16 71h1v7h-1zM19 68h1v10h-1zM22 70h1v8h-1zM25 71h1v7h-1zM28 70h1v8h-1zM31 69h1v9h-1zM34 70h1v8h-1zM37 71h1v7h-1zM40 71h1v7h-1zM43 70h1v8h-1zM46 71h1v7h-1zM49 68h1v10h-1zM52 70h1v8h-1zM55 68h1v10h-1zM58 68h1v10h-1zM61 69h1v9h-1zM64 71h1v7h-1zM67 71h1v7h-1zM70 71h1v7h-1zM73 70h1v8h-1zM76 70h1v8h-1zM79 68h1v10h-1zM82 68h1v10h-1zM85 69h1v9h-1zM88 68h1v10h-1zM91 71h1v7h-1zM94 68h1v10h-1zM97 69h1v9h-1zM100 71h1v7h-1zM103 70h1v8h-1zM106 68h1v10h-1zM109 70h1v8h-1zM112 70h1v8h-1zM115 70h1v8h-1zM118 70h1v8h-1zM121 68h1v10h-1zM124 71h1v7h-1zM127 69h1v9h-1zM133 68h1v10h-1zM136 71h1v7h-1zM139 71h1v7h-1zM142 70h1v8h-1zM145 68h1v10h-1zM148 69h1v9h-1zM151 71h1v7h-1zM154 69h1v9h-1zM157 70h1v8h-1zM160 68h1v10h-1zM163 71h1v7h-1zM166 68h1v10h-1zM169 70h1v8h-1zM172 69h1v9h-1zM175 70h1v8h-1zM178 69h1v9h-1zM181 71h1v7h-1zM184 71h1v7h-1zM187 68h1v10h-1zM190 71h1v7h-1zM193 69h1v9h-1zM196 68h1v10h-1zM199 68h1v10h-1zM202 71h1v7h-1zM205 69h1v9h-1zM208 70h1v8h-1zM211 68h1v10h-1zM214 70h1v8h-1zM217 70h1v8h-1zM220 68h1v10h-1zM223 68h1v10h-1zM226 68h1v10h-1zM229 70h1v8h-1zM232 69h1v9h-1zM235 69h1v9h-1zM238 71h1v7h-1zM241 70h1v8h-1zM244 70h1v8h-1zM247 68h1v10h-1zM250 68h1v10h-1zM253 69h1v9h-1zM256 69h1v9h-1zM259 71h1v7h-1zM262 70h1v8h-1zM265 70h1v8h-1zM268 71h1v7h-1zM271 69h1v9h-1zM274 70h1v8h-1zM277 71h1v7h-1zM280 71h1v7h-1zM283 69h1v9h-1zM286 62h1v16h-1zM289 63h1v15h-1zM292 65h1v13h-1zM295 63h1v15h-1zM298 66h1v12h-1zM301 62h1v16h-1zM304 63h1v15h-1zM307 66h1v12h-1zM310 66h1v12h-1zM313 65h1v13h-1zM316 63h1v15h-1zM319 65h1v13h-1zM322 63h1v15h-1zM325 62h1v16h-1zM328 65h1v13h-1zM331 63h1v15h-1zM334 62h1v16h-1zM337 60h1v18h-1zM340 61h1v17h-1zM343 63h1v15h-1zM346 60h1v18h-1zM349 60h1v18h-1zM352 69h1v9h-1zM355 66h1v12h-1zM358 66h1v12h-1zM361 66h1v12h-1zM364 66h1v12h-1zM367 70h1v8h-1z" fill="#FCCCF2"/><path d="M2 3.5H368M2 18.5H368M2 33.5H368M2 48.5H368M2 63.5H368M2 78.5H368" stroke="#D04040" stroke-opacity="0.28" fill="none"/><path d="M0 0.5H368M0.5 0V79" stroke="#ACA899" fill="none"/><path d="M1 1.5H367M1.5 1V78" stroke="#716F64" fill="none"/><path d="M0 78.5H368M367.5 0V79" stroke="#FFFFFF" fill="none"/></svg>
<div style="position:absolute;left:17px;top:211px;width:108px;height:38px;background:#FFF;border:1px solid #1A0A0A;box-sizing:border-box;"></div>
<div style="position:absolute;left:20px;top:215px;width:14px;height:14px;background:#0000FF;border:1px solid #101030;box-sizing:border-box;"></div>
<div style="position:absolute;left:20px;top:231px;width:14px;height:14px;background:#FF0000;border:1px solid #301010;box-sizing:border-box;"></div>
<div style="position:absolute;left:35px;top:216.69px;font-family:'Liberation Sans',sans-serif;font-size:11px;line-height:11px;color:#000;font-weight:normal;white-space:nowrap;letter-spacing:-0.2px;">Tx:&nbsp; 189.2 kbps</div>
<div style="position:absolute;left:35px;top:232.69px;font-family:'Liberation Sans',sans-serif;font-size:11px;line-height:11px;color:#000;font-weight:normal;white-space:nowrap;letter-spacing:-0.2px;">Rx:&nbsp; 2.0 Mbps</div>
<svg style="position:absolute;left:13px;top:260px" width="368" height="79" shape-rendering="crispEdges"><rect x="0" y="0" width="368" height="79" fill="#FFFFFF"/><path d="M13.5 2V79M28.5 2V79M43.5 2V79M58.5 2V79M73.5 2V79M88.5 2V79M103.5 2V79M118.5 2V79M133.5 2V79M148.5 2V79M163.5 2V79M178.5 2V79M193.5 2V79M208.5 2V79M223.5 2V79M238.5 2V79M253.5 2V79M268.5 2V79M283.5 2V79M298.5 2V79M313.5 2V79M328.5 2V79M343.5 2V79M358.5 2V79M2 18.5H368M2 33.5H368M2 48.5H368M2 63.5H368M2 78.5H368" stroke="#D0D0D4" stroke-width="1" fill="none"/><path d="M2 46h1v32h-1zM5 41h1v37h-1zM8 42h1v36h-1zM11 46h1v32h-1zM14 41h1v37h-1zM17 48h1v30h-1zM20 48h1v30h-1zM23 44h1v34h-1zM26 45h1v33h-1zM29 47h1v31h-1zM32 40h1v38h-1zM35 42h1v36h-1zM38 40h1v38h-1zM41 40h1v38h-1zM44 43h1v35h-1zM47 43h1v35h-1zM50 47h1v31h-1zM53 46h1v32h-1zM56 42h1v36h-1zM59 46h1v32h-1zM62 48h1v30h-1zM65 43h1v35h-1zM68 43h1v35h-1zM71 41h1v37h-1zM74 40h1v38h-1zM77 47h1v31h-1zM80 44h1v34h-1zM83 46h1v32h-1zM86 43h1v35h-1zM89 40h1v38h-1zM92 43h1v35h-1zM95 48h1v30h-1zM98 43h1v35h-1zM101 45h1v33h-1zM104 43h1v35h-1zM107 42h1v36h-1zM110 43h1v35h-1zM113 46h1v32h-1zM116 40h1v38h-1zM119 46h1v32h-1zM122 47h1v31h-1zM125 47h1v31h-1zM131 44h1v34h-1zM134 46h1v32h-1zM137 41h1v37h-1zM140 42h1v36h-1zM143 45h1v33h-1zM146 40h1v38h-1zM149 42h1v36h-1zM152 44h1v34h-1zM155 40h1v38h-1zM158 47h1v31h-1zM161 47h1v31h-1zM164 46h1v32h-1zM167 46h1v32h-1zM170 48h1v30h-1zM173 42h1v36h-1zM176 44h1v34h-1zM179 41h1v37h-1zM182 44h1v34h-1zM185 48h1v30h-1zM188 42h1v36h-1zM191 42h1v36h-1zM194 43h1v35h-1zM197 45h1v33h-1zM200 44h1v34h-1zM203 41h1v37h-1zM206 45h1v33h-1zM209 41h1v37h-1zM212 43h1v35h-1zM215 46h1v32h-1zM218 44h1v34h-1zM221 40h1v38h-1zM224 46h1v32h-1zM227 40h1v38h-1zM230 43h1v35h-1zM233 45h1v33h-1zM236 45h1v33h-1zM239 45h1v33h-1zM242 48h1v30h-1zM245 48h1v30h-1zM248 47h1v31h-1zM251 46h1v32h-1zM254 43h1v35h-1zM257 45h1v33h-1zM260 46h1v32h-1zM263 41h1v37h-1zM266 44h1v34h-1zM269 43h1v35h-1zM272 43h1v35h-1zM275 46h1v32h-1zM278 47h1v31h-1zM281 47h1v31h-1zM284 41h1v37h-1zM287 47h1v31h-1zM290 46h1v32h-1zM293 42h1v36h-1zM296 44h1v34h-1zM299 42h1v36h-1zM302 42h1v36h-1zM305 43h1v35h-1zM308 43h1v35h-1zM311 41h1v37h-1zM314 47h1v31h-1zM317 41h1v37h-1zM320 42h1v36h-1zM323 45h1v33h-1zM326 43h1v35h-1zM329 39h1v39h-1zM332 47h1v31h-1zM335 43h1v35h-1zM338 43h1v35h-1zM341 46h1v32h-1zM344 45h1v33h-1zM347 41h1v37h-1zM350 40h1v38h-1zM353 41h1v37h-1zM356 42h1v36h-1zM359 39h1v39h-1zM362 47h1v31h-1zM365 42h1v36h-1z" fill="#520C66"/><path d="M2 39h1v7h-1zM4 39h1v7h-1zM5 36h1v5h-1zM7 36h1v5h-1zM8 41h1v1h-1zM10 41h1v1h-1zM11 37h1v9h-1zM13 37h1v9h-1zM14 40h1v1h-1zM16 40h1v1h-1zM23 37h1v7h-1zM25 37h1v7h-1zM26 43h1v2h-1zM28 43h1v2h-1zM29 37h1v10h-1zM31 37h1v10h-1zM32 38h1v2h-1zM34 38h1v2h-1zM35 38h1v4h-1zM37 38h1v4h-1zM38 38h1v2h-1zM40 38h1v2h-1zM41 38h1v2h-1zM43 38h1v2h-1zM44 38h1v5h-1zM46 38h1v5h-1zM50 38h1v9h-1zM52 38h1v9h-1zM56 36h1v6h-1zM58 36h1v6h-1zM59 38h1v8h-1zM61 38h1v8h-1zM62 46h1v2h-1zM64 46h1v2h-1zM65 41h1v2h-1zM67 41h1v2h-1zM68 38h1v5h-1zM70 38h1v5h-1zM71 39h1v2h-1zM73 39h1v2h-1zM80 39h1v5h-1zM82 39h1v5h-1zM86 36h1v7h-1zM88 36h1v7h-1zM89 37h1v3h-1zM91 37h1v3h-1zM92 39h1v4h-1zM94 39h1v4h-1zM95 47h1v1h-1zM97 47h1v1h-1zM98 37h1v6h-1zM100 37h1v6h-1zM104 39h1v4h-1zM106 39h1v4h-1zM107 38h1v4h-1zM109 38h1v4h-1zM113 45h1v1h-1zM115 45h1v1h-1zM116 37h1v3h-1zM118 37h1v3h-1zM122 37h1v10h-1zM124 37h1v10h-1zM125 39h1v8h-1zM127 39h1v8h-1zM131 43h1v1h-1zM133 43h1v1h-1zM134 39h1v7h-1zM136 39h1v7h-1zM137 38h1v3h-1zM139 38h1v3h-1zM143 37h1v8h-1zM145 37h1v8h-1zM146 39h1v1h-1zM148 39h1v1h-1zM149 41h1v1h-1zM151 41h1v1h-1zM152 37h1v7h-1zM154 37h1v7h-1zM155 36h1v4h-1zM157 36h1v4h-1zM158 36h1v11h-1zM160 36h1v11h-1zM161 39h1v8h-1zM163 39h1v8h-1zM164 36h1v10h-1zM166 36h1v10h-1zM167 36h1v10h-1zM169 36h1v10h-1zM170 36h1v12h-1zM172 36h1v12h-1zM173 37h1v5h-1zM175 37h1v5h-1zM176 37h1v7h-1zM178 37h1v7h-1zM179 37h1v4h-1zM181 37h1v4h-1zM185 38h1v10h-1zM187 38h1v10h-1zM188 39h1v3h-1zM190 39h1v3h-1zM191 39h1v3h-1zM193 39h1v3h-1zM194 39h1v4h-1zM196 39h1v4h-1zM197 36h1v9h-1zM199 36h1v9h-1zM203 38h1v3h-1zM205 38h1v3h-1zM206 44h1v1h-1zM208 44h1v1h-1zM212 42h1v1h-1zM214 42h1v1h-1zM215 36h1v10h-1zM217 36h1v10h-1zM218 36h1v8h-1zM220 36h1v8h-1zM221 38h1v2h-1zM223 38h1v2h-1zM224 38h1v8h-1zM226 38h1v8h-1zM227 37h1v3h-1zM229 37h1v3h-1zM230 41h1v2h-1zM232 41h1v2h-1zM233 37h1v8h-1zM235 37h1v8h-1zM236 38h1v7h-1zM238 38h1v7h-1zM239 39h1v6h-1zM241 39h1v6h-1zM245 47h1v1h-1zM247 47h1v1h-1zM248 39h1v8h-1zM250 39h1v8h-1zM251 38h1v8h-1zM253 38h1v8h-1zM254 36h1v7h-1zM256 36h1v7h-1zM257 37h1v8h-1zM259 37h1v8h-1zM260 39h1v7h-1zM262 39h1v7h-1zM263 38h1v3h-1zM265 38h1v3h-1zM266 36h1v8h-1zM268 36h1v8h-1zM269 38h1v5h-1zM271 38h1v5h-1zM272 37h1v6h-1zM274 37h1v6h-1zM275 36h1v10h-1zM277 36h1v10h-1zM278 36h1v11h-1zM280 36h1v11h-1zM281 39h1v8h-1zM283 39h1v8h-1zM287 45h1v2h-1zM289 45h1v2h-1zM290 37h1v9h-1zM292 37h1v9h-1zM293 37h1v5h-1zM295 37h1v5h-1zM296 37h1v7h-1zM298 37h1v7h-1zM299 37h1v5h-1zM301 37h1v5h-1zM302 36h1v6h-1zM304 36h1v6h-1zM305 36h1v7h-1zM307 36h1v7h-1zM308 36h1v7h-1zM310 36h1v7h-1zM311 40h1v1h-1zM313 40h1v1h-1zM314 37h1v10h-1zM316 37h1v10h-1zM317 38h1v3h-1zM319 38h1v3h-1zM320 36h1v6h-1zM322 36h1v6h-1zM323 44h1v1h-1zM325 44h1v1h-1zM329 38h1v1h-1zM331 38h1v1h-1zM332 45h1v2h-1zM334 45h1v2h-1zM335 39h1v4h-1zM337 39h1v4h-1zM338 39h1v4h-1zM340 39h1v4h-1zM341 39h1v7h-1zM343 39h1v7h-1zM344 39h1v6h-1zM346 39h1v6h-1zM347 38h1v3h-1zM349 38h1v3h-1zM350 37h1v3h-1zM352 37h1v3h-1zM353 37h1v4h-1zM355 37h1v4h-1zM356 38h1v4h-1zM358 38h1v4h-1zM362 36h1v11h-1zM364 36h1v11h-1zM365 39h1v3h-1zM367 39h1v3h-1z" fill="#F9D2D2"/><path d="M3 46h1v32h-1zM6 41h1v37h-1zM9 42h1v36h-1zM12 46h1v32h-1zM15 41h1v37h-1zM18 48h1v30h-1zM21 48h1v30h-1zM24 44h1v34h-1zM27 45h1v33h-1zM30 47h1v31h-1zM33 40h1v38h-1zM36 42h1v36h-1zM39 40h1v38h-1zM42 40h1v38h-1zM45 43h1v35h-1zM48 43h1v35h-1zM51 47h1v31h-1zM54 46h1v32h-1zM57 42h1v36h-1zM60 46h1v32h-1zM63 48h1v30h-1zM66 43h1v35h-1zM69 43h1v35h-1zM72 41h1v37h-1zM75 40h1v38h-1zM78 47h1v31h-1zM81 44h1v34h-1zM84 46h1v32h-1zM87 43h1v35h-1zM90 40h1v38h-1zM93 43h1v35h-1zM96 48h1v30h-1zM99 43h1v35h-1zM102 45h1v33h-1zM105 43h1v35h-1zM108 42h1v36h-1zM111 43h1v35h-1zM114 46h1v32h-1zM117 40h1v38h-1zM120 46h1v32h-1zM123 47h1v31h-1zM126 47h1v31h-1zM132 44h1v34h-1zM135 46h1v32h-1zM138 41h1v37h-1zM141 42h1v36h-1zM144 45h1v33h-1zM147 40h1v38h-1zM150 42h1v36h-1zM153 44h1v34h-1zM156 40h1v38h-1zM159 47h1v31h-1zM162 47h1v31h-1zM165 46h1v32h-1zM168 46h1v32h-1zM171 48h1v30h-1zM174 42h1v36h-1zM177 44h1v34h-1zM180 41h1v37h-1zM183 44h1v34h-1zM186 48h1v30h-1zM189 42h1v36h-1zM192 42h1v36h-1zM195 43h1v35h-1zM198 45h1v33h-1zM201 44h1v34h-1zM204 41h1v37h-1zM207 45h1v33h-1zM210 41h1v37h-1zM213 43h1v35h-1zM216 46h1v32h-1zM219 44h1v34h-1zM222 40h1v38h-1zM225 46h1v32h-1zM228 40h1v38h-1zM231 43h1v35h-1zM234 45h1v33h-1zM237 45h1v33h-1zM240 45h1v33h-1zM243 48h1v30h-1zM246 48h1v30h-1zM249 47h1v31h-1zM252 46h1v32h-1zM255 43h1v35h-1zM258 45h1v33h-1zM261 46h1v32h-1zM264 41h1v37h-1zM267 44h1v34h-1zM270 43h1v35h-1zM273 43h1v35h-1zM276 46h1v32h-1zM279 47h1v31h-1zM282 47h1v31h-1zM285 41h1v37h-1zM288 47h1v31h-1zM291 46h1v32h-1zM294 42h1v36h-1zM297 44h1v34h-1zM300 42h1v36h-1zM303 42h1v36h-1zM306 43h1v35h-1zM309 43h1v35h-1zM312 41h1v37h-1zM315 47h1v31h-1zM318 41h1v37h-1zM321 42h1v36h-1zM324 45h1v33h-1zM327 43h1v35h-1zM330 39h1v39h-1zM333 47h1v31h-1zM336 43h1v35h-1zM339 43h1v35h-1zM342 46h1v32h-1zM345 45h1v33h-1zM348 41h1v37h-1zM351 40h1v38h-1zM354 41h1v37h-1zM357 42h1v36h-1zM360 39h1v39h-1zM363 47h1v31h-1zM366 42h1v36h-1z" fill="#780E64"/><path d="M3 39h1v7h-1zM6 36h1v5h-1zM9 41h1v1h-1zM12 37h1v9h-1zM15 40h1v1h-1zM24 37h1v7h-1zM27 43h1v2h-1zM30 37h1v10h-1zM33 38h1v2h-1zM36 38h1v4h-1zM39 38h1v2h-1zM42 38h1v2h-1zM45 38h1v5h-1zM51 38h1v9h-1zM57 36h1v6h-1zM60 38h1v8h-1zM63 46h1v2h-1zM66 41h1v2h-1zM69 38h1v5h-1zM72 39h1v2h-1zM81 39h1v5h-1zM87 36h1v7h-1zM90 37h1v3h-1zM93 39h1v4h-1zM96 47h1v1h-1zM99 37h1v6h-1zM105 39h1v4h-1zM108 38h1v4h-1zM114 45h1v1h-1zM117 37h1v3h-1zM123 37h1v10h-1zM126 39h1v8h-1zM132 43h1v1h-1zM135 39h1v7h-1zM138 38h1v3h-1zM144 37h1v8h-1zM147 39h1v1h-1zM150 41h1v1h-1zM153 37h1v7h-1zM156 36h1v4h-1zM159 36h1v11h-1zM162 39h1v8h-1zM165 36h1v10h-1zM168 36h1v10h-1zM171 36h1v12h-1zM174 37h1v5h-1zM177 37h1v7h-1zM180 37h1v4h-1zM186 38h1v10h-1zM189 39h1v3h-1zM192 39h1v3h-1zM195 39h1v4h-1zM198 36h1v9h-1zM204 38h1v3h-1zM207 44h1v1h-1zM213 42h1v1h-1zM216 36h1v10h-1zM219 36h1v8h-1zM222 38h1v2h-1zM225 38h1v8h-1zM228 37h1v3h-1zM231 41h1v2h-1zM234 37h1v8h-1zM237 38h1v7h-1zM240 39h1v6h-1zM246 47h1v1h-1zM249 39h1v8h-1zM252 38h1v8h-1zM255 36h1v7h-1zM258 37h1v8h-1zM261 39h1v7h-1zM264 38h1v3h-1zM267 36h1v8h-1zM270 38h1v5h-1zM273 37h1v6h-1zM276 36h1v10h-1zM279 36h1v11h-1zM282 39h1v8h-1zM288 45h1v2h-1zM291 37h1v9h-1zM294 37h1v5h-1zM297 37h1v7h-1zM300 37h1v5h-1zM303 36h1v6h-1zM306 36h1v7h-1zM309 36h1v7h-1zM312 40h1v1h-1zM315 37h1v10h-1zM318 38h1v3h-1zM321 36h1v6h-1zM324 44h1v1h-1zM330 38h1v1h-1zM333 45h1v2h-1zM336 39h1v4h-1zM339 39h1v4h-1zM342 39h1v7h-1zM345 39h1v6h-1zM348 38h1v3h-1zM351 37h1v3h-1zM354 37h1v4h-1zM357 38h1v4h-1zM363 36h1v11h-1zM366 39h1v3h-1z" fill="#7A2828"/><path d="M4 46h1v32h-1zM7 41h1v37h-1zM10 42h1v36h-1zM13 46h1v32h-1zM16 41h1v37h-1zM19 48h1v30h-1zM22 48h1v30h-1zM25 44h1v34h-1zM28 45h1v33h-1zM31 47h1v31h-1zM34 40h1v38h-1zM37 42h1v36h-1zM40 40h1v38h-1zM43 40h1v38h-1zM46 43h1v35h-1zM49 43h1v35h-1zM52 47h1v31h-1zM55 46h1v32h-1zM58 42h1v36h-1zM61 46h1v32h-1zM64 48h1v30h-1zM67 43h1v35h-1zM70 43h1v35h-1zM73 41h1v37h-1zM76 40h1v38h-1zM79 47h1v31h-1zM82 44h1v34h-1zM85 46h1v32h-1zM88 43h1v35h-1zM91 40h1v38h-1zM94 43h1v35h-1zM97 48h1v30h-1zM100 43h1v35h-1zM103 45h1v33h-1zM106 43h1v35h-1zM109 42h1v36h-1zM112 43h1v35h-1zM115 46h1v32h-1zM118 40h1v38h-1zM121 46h1v32h-1zM124 47h1v31h-1zM127 47h1v31h-1zM133 44h1v34h-1zM136 46h1v32h-1zM139 41h1v37h-1zM142 42h1v36h-1zM145 45h1v33h-1zM148 40h1v38h-1zM151 42h1v36h-1zM154 44h1v34h-1zM157 40h1v38h-1zM160 47h1v31h-1zM163 47h1v31h-1zM166 46h1v32h-1zM169 46h1v32h-1zM172 48h1v30h-1zM175 42h1v36h-1zM178 44h1v34h-1zM181 41h1v37h-1zM184 44h1v34h-1zM187 48h1v30h-1zM190 42h1v36h-1zM193 42h1v36h-1zM196 43h1v35h-1zM199 45h1v33h-1zM202 44h1v34h-1zM205 41h1v37h-1zM208 45h1v33h-1zM211 41h1v37h-1zM214 43h1v35h-1zM217 46h1v32h-1zM220 44h1v34h-1zM223 40h1v38h-1zM226 46h1v32h-1zM229 40h1v38h-1zM232 43h1v35h-1zM235 45h1v33h-1zM238 45h1v33h-1zM241 45h1v33h-1zM244 48h1v30h-1zM247 48h1v30h-1zM250 47h1v31h-1zM253 46h1v32h-1zM256 43h1v35h-1zM259 45h1v33h-1zM262 46h1v32h-1zM265 41h1v37h-1zM268 44h1v34h-1zM271 43h1v35h-1zM274 43h1v35h-1zM277 46h1v32h-1zM280 47h1v31h-1zM283 47h1v31h-1zM286 41h1v37h-1zM289 47h1v31h-1zM292 46h1v32h-1zM295 42h1v36h-1zM298 44h1v34h-1zM301 42h1v36h-1zM304 42h1v36h-1zM307 43h1v35h-1zM310 43h1v35h-1zM313 41h1v37h-1zM316 47h1v31h-1zM319 41h1v37h-1zM322 42h1v36h-1zM325 45h1v33h-1zM328 43h1v35h-1zM331 39h1v39h-1zM334 47h1v31h-1zM337 43h1v35h-1zM340 43h1v35h-1zM343 46h1v32h-1zM346 45h1v33h-1zM349 41h1v37h-1zM352 40h1v38h-1zM355 41h1v37h-1zM358 42h1v36h-1zM361 39h1v39h-1zM364 47h1v31h-1zM367 42h1v36h-1z" fill="#FCCCF2"/><path d="M0 0.5H368M0.5 0V79" stroke="#ACA899" fill="none"/><path d="M1 1.5H367M1.5 1V78" stroke="#716F64" fill="none"/><path d="M0 78.5H368M367.5 0V79" stroke="#FFFFFF" fill="none"/></svg>
<div style="position:absolute;left:17px;top:297px;width:120px;height:38px;background:#FFF;border:1px solid #1A0A0A;box-sizing:border-box;"></div>
<div style="position:absolute;left:20px;top:301px;width:14px;height:14px;background:#0000FF;border:1px solid #101030;box-sizing:border-box;"></div>
<div style="position:absolute;left:20px;top:317px;width:14px;height:14px;background:#FF0000;border:1px solid #301010;box-sizing:border-box;"></div>
<div style="position:absolute;left:35px;top:302.69px;font-family:'Liberation Sans',sans-serif;font-size:11px;line-height:11px;color:#000;font-weight:normal;white-space:nowrap;letter-spacing:-0.2px;">Tx Packet:&nbsp; 220 p/s</div>
<div style="position:absolute;left:35px;top:318.69px;font-family:'Liberation Sans',sans-serif;font-size:11px;line-height:11px;color:#000;font-weight:normal;white-space:nowrap;letter-spacing:-0.2px;">Rx Packet:&nbsp; 243 p/s</div>
<div style="position:absolute;left:6px;top:347px;width:380px;height:1px;background:#ACA899;"></div>
<div style="position:absolute;left:6px;top:348px;width:380px;height:1px;background:#FFFFFF;"></div>
<div style="position:absolute;left:6px;top:350px;width:110px;height:19px;border-top:1px solid #ACA899;border-left:1px solid #ACA899;box-sizing:border-box;border-right:1px solid #FFF;border-bottom:1px solid #FFF;"></div>
<div style="position:absolute;left:7px;top:354.69px;font-family:'Liberation Sans',sans-serif;font-size:11px;line-height:11px;color:#ACA899;font-weight:normal;white-space:nowrap;">disabled</div>
<div style="position:absolute;left:119px;top:350px;width:112px;height:19px;border-top:1px solid #ACA899;border-left:1px solid #ACA899;box-sizing:border-box;border-right:1px solid #FFF;border-bottom:1px solid #FFF;"></div>
<div style="position:absolute;left:120px;top:354.69px;font-family:'Liberation Sans',sans-serif;font-size:11px;line-height:11px;color:#000;font-weight:normal;white-space:nowrap;">running</div>
<div style="position:absolute;left:233px;top:350px;width:112px;height:19px;border-top:1px solid #ACA899;border-left:1px solid #ACA899;box-sizing:border-box;border-right:1px solid #FFF;border-bottom:1px solid #FFF;"></div>
<div style="position:absolute;left:234px;top:354.69px;font-family:'Liberation Sans',sans-serif;font-size:11px;line-height:11px;color:#ACA899;font-weight:normal;white-space:nowrap;">slave</div>
<div style="position:absolute;left:347px;top:350px;width:40px;height:19px;border-top:1px solid #ACA899;border-left:1px solid #ACA899;box-sizing:border-box;border-right:1px solid #FFF;border-bottom:1px solid #FFF;"></div>
<div style="position:absolute;left:348px;top:354.69px;font-family:'Liberation Sans',sans-serif;font-size:11px;line-height:11px;color:#000;font-weight:normal;white-space:nowrap;">link ok</div>
<div style="position:absolute;left:2px;top:370px;width:400px;height:4px;background:#6F86D8;"></div>
<div style="position:absolute;left:5px;top:369px;width:395px;height:1px;background:#FFFFFF;"></div>
<div style="position:absolute;left:382px;top:8px;width:513px;height:633px;background:#0D46D2;border-radius:7px 7px 0 0;box-shadow:inset 2px 0 0 #0A2A9A, inset -1px 0 0 #0A2A9A, inset 0 -1px 0 #0A2A9A;"></div>
<div style="position:absolute;left:382px;top:8px;width:513px;height:30px;background:linear-gradient(to bottom,#0A46D0 0px,#3D8CF8 1px,#2C86FC 3px,#1573F4 5px,#0660EC 7px,#0057E6 10px,#0054E3 20px,#0052DE 25px,#0046C8 28px,#003CB4 30px);border-radius:7px 7px 0 0;"></div>
<div style="position:absolute;left:382px;top:38px;width:1px;height:603px;background:#0A2A9A;"></div>
<div style="position:absolute;left:894px;top:38px;width:1px;height:603px;background:#0A2A9A;"></div>
<div style="position:absolute;left:387px;top:38px;width:504px;height:599px;background:#ECE9D8;"></div>
<div style="position:absolute;left:890px;top:38px;width:1px;height:599px;background:#F8F8F4;"></div>
<div style="position:absolute;left:386px;top:38px;width:1px;height:599px;background:#FFFFFF;"></div>
<div style="position:absolute;left:386px;top:37px;width:505px;height:1px;background:#FFFFFF;"></div>
<div style="position:absolute;left:387px;top:18px;width:16px;height:12px;background:#FFFFFF;box-shadow:inset 0 1px 0 #0A2A90, inset 1px 0 0 #0A2A90, inset 0 -1px 0 #0A2A90;"></div>
<div style="position:absolute;left:408px;top:19.0px;font-family:'Liberation Sans',sans-serif;font-size:13px;line-height:13px;color:#FFFFFF;font-weight:bold;white-space:nowrap;">Interface &lt;wlan1<span style="margin-left:3px">&gt;</span></div>
<div style="position:absolute;left:868px;top:14px;width:21px;height:21px;box-sizing:border-box;border:1px solid #FFFFFF;border-radius:3px;background:linear-gradient(135deg,#EE9C80 0%,#E0603E 35%,#D84A2A 70%,#C63A1C 100%);"></div>
<svg style="position:absolute;left:868px;top:14px" width="21" height="21"><path d="M6 6L15 15M15 6L6 15" stroke="#FFFFFF" stroke-width="2.2" stroke-linecap="square"/></svg>
<div style="position:absolute;left:387px;top:62px;width:376px;height:1px;background:#FFFFFF;"></div>
<div style="position:absolute;left:762px;top:62px;width:1px;height:554px;background:#ACA899;"></div>
<div style="position:absolute;left:387px;top:615px;width:376px;height:1px;background:#ACA899;"></div>
<div style="position:absolute;left:389px;top:41px;width:35px;height:21px;background:#D6D3C6;border-left:1px solid #F4F3EE;border-top:1px solid #E4E2D8;border-right:1px solid #A8A595;box-sizing:border-box;"></div>
<div style="position:absolute;left:394px;top:46.69px;font-family:'Liberation Sans',sans-serif;font-size:11px;line-height:11px;color:#000;font-weight:normal;white-space:nowrap;">WDS</div>
<div style="position:absolute;left:424px;top:41px;width:52px;height:21px;background:#D6D3C6;border-left:1px solid #F4F3EE;border-top:1px solid #E4E2D8;border-right:1px solid #A8A595;box-sizing:border-box;"></div>
<div style="position:absolute;left:429px;top:46.69px;font-family:'Liberation Sans',sans-serif;font-size:11px;line-height:11px;color:#000;font-weight:normal;white-space:nowrap;">Nstreme</div>
<div style="position:absolute;left:476px;top:41px;width:58px;height:21px;background:#D6D3C6;border-left:1px solid #F4F3EE;border-top:1px solid #E4E2D8;border-right:1px solid #A8A595;box-sizing:border-box;"></div>
<div style="position:absolute;left:481px;top:46.69px;font-family:'Liberation Sans',sans-serif;font-size:11px;line-height:11px;color:#000;font-weight:normal;white-space:nowrap;">Tx Power</div>
<div style="position:absolute;left:534px;top:41px;width:44px;height:21px;background:#D6D3C6;border-left:1px solid #F4F3EE;border-top:1px solid #E4E2D8;border-right:1px solid #A8A595;box-sizing:border-box;"></div>
<div style="position:absolute;left:539px;top:46.69px;font-family:'Liberation Sans',sans-serif;font-size:11px;line-height:11px;color:#000;font-weight:normal;white-space:nowrap;">Status</div>
<div style="position:absolute;left:578px;top:41px;width:94px;height:21px;background:#D6D3C6;border-left:1px solid #F4F3EE;border-top:1px solid #E4E2D8;border-right:1px solid #A8A595;box-sizing:border-box;"></div>
<div style="position:absolute;left:583px;top:46.69px;font-family:'Liberation Sans',sans-serif;font-size:11px;line-height:11px;color:#000;font-weight:normal;white-space:nowrap;">Advanced Status</div>
<div style="position:absolute;left:672px;top:39px;width:48px;height:24px;background:#ECE9D8;border-left:1px solid #FFFFFF;border-top:1px solid #FAFAF6;border-right:1px solid #8D8A7E;box-sizing:border-box;"></div>
<div style="position:absolute;left:679px;top:44.69px;font-family:'Liberation Sans',sans-serif;font-size:11px;line-height:11px;color:#000;font-weight:normal;white-space:nowrap;letter-spacing:0.4px;">Traffic</div>
<div style="position:absolute;left:720px;top:41px;width:19px;height:21px;background:#D6D3C6;border-left:1px solid #F4F3EE;border-top:1px solid #E4E2D8;border-right:1px solid #A8A595;box-sizing:border-box;"></div>
<div style="position:absolute;left:725px;top:46.69px;font-family:'Liberation Sans',sans-serif;font-size:11px;line-height:11px;color:#000;font-weight:normal;white-space:nowrap;">...</div>
<div style="position:absolute;right:453px;top:74.69px;font-family:'Liberation Sans',sans-serif;font-size:11px;line-height:11px;color:#000;font-weight:normal;white-space:nowrap;letter-spacing:-0.25px;">Tx:</div>
<div style="position:absolute;left:451px;top:70px;width:303px;height:18px;border:1px solid #ACA899;border-right-color:#ACA899;box-sizing:border-box;background:#ECE9D8;"></div>
<div style="position:absolute;left:451px;top:88px;width:304px;height:1px;background:#FFFFFF;"></div>
<div style="position:absolute;left:754px;top:70px;width:1px;height:19px;background:#FFFFFF;"></div>
<div style="position:absolute;left:454px;top:74.69px;font-family:'Liberation Sans',sans-serif;font-size:11px;line-height:11px;color:#000;font-weight:normal;white-space:nowrap;">2.5 Mbps</div>
<div style="position:absolute;right:453px;top:100.69px;font-family:'Liberation Sans',sans-serif;font-size:11px;line-height:11px;color:#000;font-weight:normal;white-space:nowrap;letter-spacing:-0.25px;">Rx:</div>
<div style="position:absolute;left:451px;top:96px;width:303px;height:18px;border:1px solid #ACA899;border-right-color:#ACA899;box-sizing:border-box;background:#ECE9D8;"></div>
<div style="position:absolute;left:451px;top:114px;width:304px;height:1px;background:#FFFFFF;"></div>
<div style="position:absolute;left:754px;top:96px;width:1px;height:19px;background:#FFFFFF;"></div>
<div style="position:absolute;left:454px;top:100.69px;font-family:'Liberation Sans',sans-serif;font-size:11px;line-height:11px;color:#000;font-weight:normal;white-space:nowrap;">311.5 kbps</div>
<div style="position:absolute;right:453px;top:126.69px;font-family:'Liberation Sans',sans-serif;font-size:11px;line-height:11px;color:#000;font-weight:normal;white-space:nowrap;letter-spacing:-0.25px;">Tx Packet:</div>
<div style="position:absolute;left:451px;top:122px;width:303px;height:18px;border:1px solid #ACA899;border-right-color:#ACA899;box-sizing:border-box;background:#ECE9D8;"></div>
<div style="position:absolute;left:451px;top:140px;width:304px;height:1px;background:#FFFFFF;"></div>
<div style="position:absolute;left:754px;top:122px;width:1px;height:19px;background:#FFFFFF;"></div>
<div style="position:absolute;left:454px;top:126.69px;font-family:'Liberation Sans',sans-serif;font-size:11px;line-height:11px;color:#000;font-weight:normal;white-space:nowrap;">329 p/s</div>
<div style="position:absolute;right:453px;top:152.69px;font-family:'Liberation Sans',sans-serif;font-size:11px;line-height:11px;color:#000;font-weight:normal;white-space:nowrap;letter-spacing:-0.25px;">Rx Packet:</div>
<div style="position:absolute;left:451px;top:148px;width:303px;height:18px;border:1px solid #ACA899;border-right-color:#ACA899;box-sizing:border-box;background:#ECE9D8;"></div>
<div style="position:absolute;left:451px;top:166px;width:304px;height:1px;background:#FFFFFF;"></div>
<div style="position:absolute;left:754px;top:148px;width:1px;height:19px;background:#FFFFFF;"></div>
<div style="position:absolute;left:454px;top:152.69px;font-family:'Liberation Sans',sans-serif;font-size:11px;line-height:11px;color:#000;font-weight:normal;white-space:nowrap;">279 p/s</div>
<svg style="position:absolute;left:395px;top:175px" width="360" height="212" shape-rendering="crispEdges"><rect x="0" y="0" width="360" height="212" fill="#FFFFFF"/><path d="M13.5 2V212M28.5 2V212M43.5 2V212M58.5 2V212M73.5 2V212M88.5 2V212M103.5 2V212M118.5 2V212M133.5 2V212M148.5 2V212M163.5 2V212M178.5 2V212M193.5 2V212M208.5 2V212M223.5 2V212M238.5 2V212M253.5 2V212M268.5 2V212M283.5 2V212M298.5 2V212M313.5 2V212M328.5 2V212M343.5 2V212M358.5 2V212M2 16.5H360M2 31.5H360M2 46.5H360M2 61.5H360M2 76.5H360M2 91.5H360M2 106.5H360M2 121.5H360M2 136.5H360M2 151.5H360M2 166.5H360M2 181.5H360M2 196.5H360M2 211.5H360" stroke="#D0D0D4" stroke-width="1" fill="none"/><path d="M2 208h1v3h-1zM5 207h1v4h-1zM8 208h1v3h-1zM11 207h1v4h-1zM14 208h1v3h-1zM17 208h1v3h-1zM20 207h1v4h-1zM23 207h1v4h-1zM26 208h1v3h-1zM29 208h1v3h-1zM32 208h1v3h-1zM35 207h1v4h-1zM38 208h1v3h-1zM41 207h1v4h-1zM44 208h1v3h-1zM47 207h1v4h-1zM50 207h1v4h-1zM53 207h1v4h-1zM56 207h1v4h-1zM59 208h1v3h-1zM62 207h1v4h-1zM65 207h1v4h-1zM68 208h1v3h-1zM71 207h1v4h-1zM74 208h1v3h-1zM77 208h1v3h-1zM80 208h1v3h-1zM83 207h1v4h-1zM86 208h1v3h-1zM89 207h1v4h-1zM92 208h1v3h-1zM95 207h1v4h-1zM98 208h1v3h-1zM101 208h1v3h-1zM104 208h1v3h-1zM107 207h1v4h-1zM110 203h1v8h-1zM113 200h1v11h-1zM116 203h1v8h-1zM119 200h1v11h-1zM122 201h1v10h-1zM125 200h1v11h-1zM131 203h1v8h-1zM134 201h1v10h-1zM137 203h1v8h-1zM140 202h1v9h-1zM143 201h1v10h-1zM146 203h1v8h-1zM149 202h1v9h-1zM152 200h1v11h-1zM155 200h1v11h-1zM158 201h1v10h-1zM161 202h1v9h-1zM164 201h1v10h-1zM167 201h1v10h-1zM170 202h1v9h-1zM173 200h1v11h-1zM176 204h1v7h-1zM179 201h1v10h-1zM182 203h1v8h-1zM185 201h1v10h-1zM188 204h1v7h-1zM191 203h1v8h-1zM194 203h1v8h-1zM197 201h1v10h-1zM200 200h1v11h-1zM203 200h1v11h-1zM206 202h1v9h-1zM209 204h1v7h-1zM212 203h1v8h-1zM215 204h1v7h-1zM218 201h1v10h-1zM221 202h1v9h-1zM224 201h1v10h-1zM227 203h1v8h-1zM230 201h1v10h-1zM233 200h1v11h-1zM236 203h1v8h-1zM239 201h1v10h-1zM242 203h1v8h-1zM245 202h1v9h-1zM248 203h1v8h-1zM251 202h1v9h-1zM254 200h1v11h-1zM257 203h1v8h-1zM260 200h1v11h-1zM263 202h1v9h-1zM266 200h1v11h-1zM269 200h1v11h-1zM272 204h1v7h-1zM275 203h1v8h-1zM278 198h1v13h-1zM281 198h1v13h-1zM284 198h1v13h-1zM287 197h1v14h-1zM290 195h1v16h-1zM293 199h1v12h-1zM296 196h1v15h-1zM299 195h1v16h-1zM305 199h1v12h-1zM308 196h1v15h-1zM311 199h1v12h-1zM314 198h1v13h-1zM317 195h1v16h-1zM320 195h1v16h-1zM323 198h1v13h-1zM326 197h1v14h-1zM329 196h1v15h-1zM332 195h1v16h-1zM335 202h1v9h-1zM338 201h1v10h-1zM341 204h1v7h-1zM344 202h1v9h-1zM347 204h1v7h-1zM350 203h1v8h-1zM353 204h1v7h-1zM356 201h1v10h-1z" fill="#520C66"/><path d="M2 152h1v56h-1zM5 157h1v50h-1zM8 150h1v58h-1zM11 154h1v53h-1zM14 152h1v56h-1zM17 150h1v58h-1zM20 154h1v53h-1zM23 153h1v54h-1zM26 151h1v57h-1zM29 150h1v58h-1zM32 153h1v55h-1zM35 129h1v78h-1zM38 148h1v60h-1zM41 153h1v54h-1zM44 155h1v53h-1zM47 153h1v54h-1zM50 154h1v53h-1zM53 144h1v63h-1zM56 158h1v49h-1zM59 153h1v55h-1zM62 147h1v60h-1zM65 143h1v64h-1zM68 149h1v59h-1zM71 153h1v54h-1zM74 148h1v60h-1zM77 142h1v66h-1zM80 145h1v63h-1zM83 149h1v58h-1zM86 142h1v66h-1zM89 141h1v66h-1zM92 153h1v55h-1zM95 143h1v64h-1zM98 145h1v63h-1zM101 150h1v58h-1zM104 143h1v65h-1zM107 124h1v83h-1zM110 165h1v38h-1zM113 159h1v41h-1zM116 151h1v52h-1zM119 144h1v56h-1zM122 149h1v52h-1zM125 157h1v43h-1zM131 156h1v47h-1zM134 157h1v44h-1zM137 153h1v50h-1zM140 155h1v47h-1zM143 162h1v39h-1zM146 148h1v55h-1zM149 153h1v49h-1zM152 158h1v42h-1zM155 162h1v38h-1zM158 160h1v41h-1zM161 159h1v43h-1zM164 148h1v53h-1zM167 149h1v52h-1zM170 152h1v50h-1zM173 150h1v50h-1zM176 157h1v47h-1zM179 149h1v52h-1zM182 153h1v50h-1zM185 148h1v53h-1zM188 146h1v58h-1zM191 155h1v48h-1zM194 152h1v51h-1zM197 155h1v46h-1zM200 153h1v47h-1zM203 155h1v45h-1zM206 154h1v48h-1zM209 156h1v48h-1zM212 151h1v52h-1zM215 157h1v47h-1zM218 153h1v48h-1zM221 153h1v49h-1zM224 165h1v36h-1zM227 158h1v45h-1zM230 165h1v36h-1zM233 161h1v39h-1zM236 154h1v49h-1zM239 154h1v47h-1zM242 158h1v45h-1zM245 151h1v51h-1zM248 161h1v42h-1zM251 155h1v47h-1zM254 153h1v47h-1zM257 155h1v48h-1zM260 158h1v42h-1zM263 159h1v43h-1zM266 154h1v46h-1zM269 163h1v37h-1zM272 155h1v49h-1zM275 162h1v41h-1zM278 155h1v43h-1zM281 162h1v36h-1zM284 162h1v36h-1zM287 156h1v41h-1zM290 160h1v35h-1zM293 153h1v46h-1zM296 147h1v49h-1zM299 106h1v89h-1zM305 135h1v64h-1zM308 126h1v70h-1zM311 133h1v66h-1zM314 158h1v40h-1zM317 153h1v42h-1zM320 156h1v39h-1zM323 153h1v45h-1zM326 150h1v47h-1zM329 161h1v35h-1zM332 160h1v35h-1zM335 153h1v49h-1zM338 159h1v42h-1zM341 166h1v38h-1zM344 167h1v35h-1zM347 156h1v48h-1zM350 156h1v47h-1zM353 159h1v45h-1zM356 166h1v35h-1z" fill="#202058"/><path d="M3 208h1v3h-1zM6 207h1v4h-1zM9 208h1v3h-1zM12 207h1v4h-1zM15 208h1v3h-1zM18 208h1v3h-1zM21 207h1v4h-1zM24 207h1v4h-1zM27 208h1v3h-1zM30 208h1v3h-1zM33 208h1v3h-1zM36 207h1v4h-1zM39 208h1v3h-1zM42 207h1v4h-1zM45 208h1v3h-1zM48 207h1v4h-1zM51 207h1v4h-1zM54 207h1v4h-1zM57 207h1v4h-1zM60 208h1v3h-1zM63 207h1v4h-1zM66 207h1v4h-1zM69 208h1v3h-1zM72 207h1v4h-1zM75 208h1v3h-1zM78 208h1v3h-1zM81 208h1v3h-1zM84 207h1v4h-1zM87 208h1v3h-1zM90 207h1v4h-1zM93 208h1v3h-1zM96 207h1v4h-1zM99 208h1v3h-1zM102 208h1v3h-1zM105 208h1v3h-1zM108 207h1v4h-1zM111 203h1v8h-1zM114 200h1v11h-1zM117 203h1v8h-1zM120 200h1v11h-1zM123 201h1v10h-1zM126 200h1v11h-1zM132 203h1v8h-1zM135 201h1v10h-1zM138 203h1v8h-1zM141 202h1v9h-1zM144 201h1v10h-1zM147 203h1v8h-1zM150 202h1v9h-1zM153 200h1v11h-1zM156 200h1v11h-1zM159 201h1v10h-1zM162 202h1v9h-1zM165 201h1v10h-1zM168 201h1v10h-1zM171 202h1v9h-1zM174 200h1v11h-1zM177 204h1v7h-1zM180 201h1v10h-1zM183 203h1v8h-1zM186 201h1v10h-1zM189 204h1v7h-1zM192 203h1v8h-1zM195 203h1v8h-1zM198 201h1v10h-1zM201 200h1v11h-1zM204 200h1v11h-1zM207 202h1v9h-1zM210 204h1v7h-1zM213 203h1v8h-1zM216 204h1v7h-1zM219 201h1v10h-1zM222 202h1v9h-1zM225 201h1v10h-1zM228 203h1v8h-1zM231 201h1v10h-1zM234 200h1v11h-1zM237 203h1v8h-1zM240 201h1v10h-1zM243 203h1v8h-1zM246 202h1v9h-1zM249 203h1v8h-1zM252 202h1v9h-1zM255 200h1v11h-1zM258 203h1v8h-1zM261 200h1v11h-1zM264 202h1v9h-1zM267 200h1v11h-1zM270 200h1v11h-1zM273 204h1v7h-1zM276 203h1v8h-1zM279 198h1v13h-1zM282 198h1v13h-1zM285 198h1v13h-1zM288 197h1v14h-1zM291 195h1v16h-1zM294 199h1v12h-1zM297 196h1v15h-1zM300 195h1v16h-1zM306 199h1v12h-1zM309 196h1v15h-1zM312 199h1v12h-1zM315 198h1v13h-1zM318 195h1v16h-1zM321 195h1v16h-1zM324 198h1v13h-1zM327 197h1v14h-1zM330 196h1v15h-1zM333 195h1v16h-1zM336 202h1v9h-1zM339 201h1v10h-1zM342 204h1v7h-1zM345 202h1v9h-1zM348 204h1v7h-1zM351 203h1v8h-1zM354 204h1v7h-1zM357 201h1v10h-1z" fill="#780E64"/><path d="M3 152h1v56h-1zM6 157h1v50h-1zM9 150h1v58h-1zM12 154h1v53h-1zM15 152h1v56h-1zM18 150h1v58h-1zM21 154h1v53h-1zM24 153h1v54h-1zM27 151h1v57h-1zM30 150h1v58h-1zM33 153h1v55h-1zM36 129h1v78h-1zM39 148h1v60h-1zM42 153h1v54h-1zM45 155h1v53h-1zM48 153h1v54h-1zM51 154h1v53h-1zM54 144h1v63h-1zM57 158h1v49h-1zM60 153h1v55h-1zM63 147h1v60h-1zM66 143h1v64h-1zM69 149h1v59h-1zM72 153h1v54h-1zM75 148h1v60h-1zM78 142h1v66h-1zM81 145h1v63h-1zM84 149h1v58h-1zM87 142h1v66h-1zM90 141h1v66h-1zM93 153h1v55h-1zM96 143h1v64h-1zM99 145h1v63h-1zM102 150h1v58h-1zM105 143h1v65h-1zM108 124h1v83h-1zM111 165h1v38h-1zM114 159h1v41h-1zM117 151h1v52h-1zM120 144h1v56h-1zM123 149h1v52h-1zM126 157h1v43h-1zM132 156h1v47h-1zM135 157h1v44h-1zM138 153h1v50h-1zM141 155h1v47h-1zM144 162h1v39h-1zM147 148h1v55h-1zM150 153h1v49h-1zM153 158h1v42h-1zM156 162h1v38h-1zM159 160h1v41h-1zM162 159h1v43h-1zM165 148h1v53h-1zM168 149h1v52h-1zM171 152h1v50h-1zM174 150h1v50h-1zM177 157h1v47h-1zM180 149h1v52h-1zM183 153h1v50h-1zM186 148h1v53h-1zM189 146h1v58h-1zM192 155h1v48h-1zM195 152h1v51h-1zM198 155h1v46h-1zM201 153h1v47h-1zM204 155h1v45h-1zM207 154h1v48h-1zM210 156h1v48h-1zM213 151h1v52h-1zM216 157h1v47h-1zM219 153h1v48h-1zM222 153h1v49h-1zM225 165h1v36h-1zM228 158h1v45h-1zM231 165h1v36h-1zM234 161h1v39h-1zM237 154h1v49h-1zM240 154h1v47h-1zM243 158h1v45h-1zM246 151h1v51h-1zM249 161h1v42h-1zM252 155h1v47h-1zM255 153h1v47h-1zM258 155h1v48h-1zM261 158h1v42h-1zM264 159h1v43h-1zM267 154h1v46h-1zM270 163h1v37h-1zM273 155h1v49h-1zM276 162h1v41h-1zM279 155h1v43h-1zM282 162h1v36h-1zM285 162h1v36h-1zM288 156h1v41h-1zM291 160h1v35h-1zM294 153h1v46h-1zM297 147h1v49h-1zM300 106h1v89h-1zM306 135h1v64h-1zM309 126h1v70h-1zM312 133h1v66h-1zM315 158h1v40h-1zM318 153h1v42h-1zM321 156h1v39h-1zM324 153h1v45h-1zM327 150h1v47h-1zM330 161h1v35h-1zM333 160h1v35h-1zM336 153h1v49h-1zM339 159h1v42h-1zM342 166h1v38h-1zM345 167h1v35h-1zM348 156h1v48h-1zM351 156h1v47h-1zM354 159h1v45h-1zM357 166h1v35h-1z" fill="#F0F0FA"/><path d="M4 208h1v3h-1zM7 207h1v4h-1zM10 208h1v3h-1zM13 207h1v4h-1zM16 208h1v3h-1zM19 208h1v3h-1zM22 207h1v4h-1zM25 207h1v4h-1zM28 208h1v3h-1zM31 208h1v3h-1zM34 208h1v3h-1zM37 207h1v4h-1zM40 208h1v3h-1zM43 207h1v4h-1zM46 208h1v3h-1zM49 207h1v4h-1zM52 207h1v4h-1zM55 207h1v4h-1zM58 207h1v4h-1zM61 208h1v3h-1zM64 207h1v4h-1zM67 207h1v4h-1zM70 208h1v3h-1zM73 207h1v4h-1zM76 208h1v3h-1zM79 208h1v3h-1zM82 208h1v3h-1zM85 207h1v4h-1zM88 208h1v3h-1zM91 207h1v4h-1zM94 208h1v3h-1zM97 207h1v4h-1zM100 208h1v3h-1zM103 208h1v3h-1zM106 208h1v3h-1zM109 207h1v4h-1zM112 203h1v8h-1zM115 200h1v11h-1zM118 203h1v8h-1zM121 200h1v11h-1zM124 201h1v10h-1zM127 200h1v11h-1zM133 203h1v8h-1zM136 201h1v10h-1zM139 203h1v8h-1zM142 202h1v9h-1zM145 201h1v10h-1zM148 203h1v8h-1zM151 202h1v9h-1zM154 200h1v11h-1zM157 200h1v11h-1zM160 201h1v10h-1zM163 202h1v9h-1zM166 201h1v10h-1zM169 201h1v10h-1zM172 202h1v9h-1zM175 200h1v11h-1zM178 204h1v7h-1zM181 201h1v10h-1zM184 203h1v8h-1zM187 201h1v10h-1zM190 204h1v7h-1zM193 203h1v8h-1zM196 203h1v8h-1zM199 201h1v10h-1zM202 200h1v11h-1zM205 200h1v11h-1zM208 202h1v9h-1zM211 204h1v7h-1zM214 203h1v8h-1zM217 204h1v7h-1zM220 201h1v10h-1zM223 202h1v9h-1zM226 201h1v10h-1zM229 203h1v8h-1zM232 201h1v10h-1zM235 200h1v11h-1zM238 203h1v8h-1zM241 201h1v10h-1zM244 203h1v8h-1zM247 202h1v9h-1zM250 203h1v8h-1zM253 202h1v9h-1zM256 200h1v11h-1zM259 203h1v8h-1zM262 200h1v11h-1zM265 202h1v9h-1zM268 200h1v11h-1zM271 200h1v11h-1zM274 204h1v7h-1zM277 203h1v8h-1zM280 198h1v13h-1zM283 198h1v13h-1zM286 198h1v13h-1zM289 197h1v14h-1zM292 195h1v16h-1zM295 199h1v12h-1zM298 196h1v15h-1zM301 195h1v16h-1zM307 199h1v12h-1zM310 196h1v15h-1zM313 199h1v12h-1zM316 198h1v13h-1zM319 195h1v16h-1zM322 195h1v16h-1zM325 198h1v13h-1zM328 197h1v14h-1zM331 196h1v15h-1zM334 195h1v16h-1zM337 202h1v9h-1zM340 201h1v10h-1zM343 204h1v7h-1zM346 202h1v9h-1zM349 204h1v7h-1zM352 203h1v8h-1zM355 204h1v7h-1zM358 201h1v10h-1z" fill="#FCCCF2"/><path d="M302 195h1v16h-1zM304 195h1v16h-1z" fill="#F9D2D2"/><path d="M303 195h1v16h-1z" fill="#7A2828"/><path d="M1 102.5H359M302.5 2V211" stroke="#7A7A7A" fill="none"/><rect x="255" y="3" width="48" height="13" fill="#D8D8D8"/><rect x="309" y="104" width="48" height="13" fill="#D8D8D8"/><path d="M0 0.5H360M0.5 0V212" stroke="#ACA899" fill="none"/><path d="M1 1.5H359M1.5 1V211" stroke="#716F64" fill="none"/><path d="M0 211.5H360M359.5 0V212" stroke="#FFFFFF" fill="none"/></svg>
<div style="position:absolute;left:397px;top:345px;width:107px;height:38px;background:#FFF;border:1px solid #1A0A0A;box-sizing:border-box;"></div>
<div style="position:absolute;left:400px;top:349px;width:14px;height:14px;background:#0000FF;border:1px solid #101030;box-sizing:border-box;"></div>
<div style="position:absolute;left:400px;top:365px;width:14px;height:14px;background:#FF0000;border:1px solid #301010;box-sizing:border-box;"></div>
<div style="position:absolute;left:415px;top:350.69px;font-family:'Liberation Sans',sans-serif;font-size:11px;line-height:11px;color:#000;font-weight:normal;white-space:nowrap;letter-spacing:-0.2px;">Tx:&nbsp; 1806.2 kbps</div>
<div style="position:absolute;left:415px;top:366.69px;font-family:'Liberation Sans',sans-serif;font-size:11px;line-height:11px;color:#000;font-weight:normal;white-space:nowrap;letter-spacing:-0.2px;">Rx:&nbsp; 218.1 kbps</div>
<div style="position:absolute;left:652px;top:178.69px;font-family:'Liberation Sans',sans-serif;font-size:11px;line-height:11px;color:#000;font-weight:normal;white-space:nowrap;">19:05:37</div>
<div style="position:absolute;left:707px;top:280.69px;font-family:'Liberation Sans',sans-serif;font-size:11px;line-height:11px;color:#000;font-weight:normal;white-space:nowrap;">4.3 Mbps</div>
<svg style="position:absolute;left:395px;top:395px" width="360" height="212" shape-rendering="crispEdges"><rect x="0" y="0" width="360" height="212" fill="#FFFFFF"/><path d="M4.5 2V212M19.5 2V212M34.5 2V212M49.5 2V212M64.5 2V212M79.5 2V212M94.5 2V212M109.5 2V212M124.5 2V212M139.5 2V212M154.5 2V212M169.5 2V212M184.5 2V212M199.5 2V212M214.5 2V212M229.5 2V212M244.5 2V212M259.5 2V212M274.5 2V212M289.5 2V212M304.5 2V212M319.5 2V212M334.5 2V212M349.5 2V212M2 16.5H360M2 31.5H360M2 46.5H360M2 61.5H360M2 76.5H360M2 91.5H360M2 106.5H360M2 121.5H360M2 136.5H360M2 151.5H360M2 166.5H360M2 181.5H360M2 196.5H360M2 211.5H360" stroke="#D0D0D4" stroke-width="1" fill="none"/><path d="M2 154h1v57h-1zM5 151h1v60h-1zM8 138h1v73h-1zM11 145h1v66h-1zM14 154h1v57h-1zM17 150h1v61h-1zM20 141h1v70h-1zM23 147h1v64h-1zM26 144h1v67h-1zM29 156h1v55h-1zM32 151h1v60h-1zM35 162h1v49h-1zM38 162h1v49h-1zM41 160h1v51h-1zM44 154h1v57h-1zM47 150h1v61h-1zM50 133h1v78h-1zM53 154h1v57h-1zM56 149h1v62h-1zM59 154h1v57h-1zM62 138h1v73h-1zM65 120h1v91h-1zM68 119h1v92h-1zM71 125h1v86h-1zM74 136h1v75h-1zM77 113h1v98h-1zM80 114h1v97h-1zM83 118h1v93h-1zM86 119h1v92h-1zM89 129h1v82h-1zM92 134h1v77h-1zM95 127h1v84h-1zM98 126h1v85h-1zM101 165h1v46h-1zM104 169h1v42h-1zM107 151h1v60h-1zM110 154h1v57h-1zM113 154h1v57h-1zM116 167h1v44h-1zM122 158h1v53h-1zM125 162h1v49h-1zM128 165h1v46h-1zM131 163h1v48h-1zM134 156h1v55h-1zM137 162h1v49h-1zM140 165h1v46h-1zM143 162h1v49h-1zM146 158h1v53h-1zM149 149h1v62h-1zM152 149h1v62h-1zM155 150h1v61h-1zM158 158h1v53h-1zM161 158h1v53h-1zM164 165h1v46h-1zM167 156h1v55h-1zM170 143h1v68h-1zM173 156h1v55h-1zM176 141h1v70h-1zM179 147h1v64h-1zM182 161h1v50h-1zM185 165h1v46h-1zM188 147h1v64h-1zM191 146h1v65h-1zM194 141h1v70h-1zM197 143h1v68h-1zM200 156h1v55h-1zM203 157h1v54h-1zM206 154h1v57h-1zM209 158h1v53h-1zM212 159h1v52h-1zM215 162h1v49h-1zM218 163h1v48h-1zM221 165h1v46h-1zM224 168h1v43h-1zM227 168h1v43h-1zM230 166h1v45h-1zM233 157h1v54h-1zM236 157h1v54h-1zM239 163h1v48h-1zM242 150h1v61h-1zM245 161h1v50h-1zM248 162h1v49h-1zM251 163h1v48h-1zM254 165h1v46h-1zM257 165h1v46h-1zM260 169h1v42h-1zM263 169h1v42h-1zM266 170h1v41h-1zM269 171h1v40h-1zM272 163h1v48h-1zM275 168h1v43h-1zM278 159h1v52h-1zM281 156h1v55h-1zM284 147h1v64h-1zM287 154h1v57h-1zM290 142h1v69h-1zM293 125h1v86h-1zM296 147h1v64h-1zM299 138h1v73h-1zM302 145h1v66h-1zM305 155h1v56h-1zM308 137h1v74h-1zM311 138h1v73h-1zM314 151h1v60h-1zM317 155h1v56h-1zM320 158h1v53h-1zM323 163h1v48h-1zM326 158h1v53h-1zM329 159h1v52h-1zM332 170h1v41h-1zM335 169h1v42h-1zM338 159h1v52h-1zM341 159h1v52h-1zM344 165h1v46h-1zM347 169h1v42h-1zM350 162h1v49h-1zM353 158h1v53h-1zM356 154h1v57h-1z" fill="#520C66"/><path d="M2 138h1v16h-1zM5 134h1v17h-1zM8 127h1v11h-1zM11 138h1v7h-1zM14 141h1v13h-1zM17 133h1v17h-1zM20 126h1v15h-1zM23 134h1v13h-1zM26 112h1v32h-1zM29 136h1v20h-1zM32 139h1v12h-1zM35 144h1v18h-1zM38 148h1v14h-1zM41 148h1v12h-1zM44 138h1v16h-1zM53 144h1v10h-1zM56 138h1v11h-1zM59 135h1v19h-1zM62 123h1v15h-1zM65 115h1v5h-1zM68 110h1v9h-1zM71 112h1v13h-1zM74 129h1v7h-1zM77 103h1v10h-1zM80 113h1v1h-1zM83 113h1v5h-1zM86 113h1v6h-1zM89 118h1v11h-1zM92 123h1v11h-1zM95 115h1v12h-1zM98 102h1v24h-1zM101 155h1v10h-1zM104 150h1v19h-1zM107 143h1v8h-1zM110 137h1v17h-1zM113 139h1v15h-1zM116 150h1v17h-1zM122 146h1v12h-1zM125 148h1v14h-1zM128 149h1v16h-1zM131 157h1v6h-1zM134 155h1v1h-1zM137 144h1v18h-1zM140 148h1v17h-1zM143 155h1v7h-1zM146 154h1v4h-1zM152 142h1v7h-1zM155 138h1v12h-1zM158 138h1v20h-1zM161 142h1v16h-1zM164 144h1v21h-1zM167 144h1v12h-1zM170 132h1v11h-1zM173 139h1v17h-1zM176 134h1v7h-1zM179 129h1v18h-1zM182 147h1v14h-1zM185 146h1v19h-1zM188 137h1v10h-1zM191 134h1v12h-1zM194 131h1v10h-1zM197 133h1v10h-1zM200 144h1v12h-1zM203 141h1v16h-1zM206 147h1v7h-1zM209 139h1v19h-1zM212 146h1v13h-1zM215 156h1v6h-1zM218 153h1v10h-1zM221 158h1v7h-1zM224 160h1v8h-1zM227 150h1v18h-1zM230 150h1v16h-1zM233 151h1v6h-1zM236 143h1v14h-1zM239 153h1v10h-1zM242 135h1v15h-1zM245 138h1v23h-1zM248 141h1v21h-1zM251 145h1v18h-1zM254 146h1v19h-1zM257 150h1v15h-1zM260 156h1v13h-1zM263 153h1v16h-1zM266 157h1v13h-1zM269 153h1v18h-1zM272 149h1v14h-1zM275 155h1v13h-1zM278 146h1v13h-1zM281 151h1v5h-1zM284 135h1v12h-1zM287 135h1v19h-1zM290 109h1v33h-1zM293 103h1v22h-1zM296 122h1v25h-1zM299 117h1v21h-1zM302 125h1v20h-1zM305 145h1v10h-1zM308 132h1v5h-1zM311 134h1v4h-1zM314 139h1v12h-1zM317 143h1v12h-1zM320 150h1v8h-1zM323 153h1v10h-1zM326 144h1v14h-1zM329 145h1v14h-1zM332 155h1v15h-1zM335 157h1v12h-1zM338 141h1v18h-1zM341 141h1v18h-1zM344 149h1v16h-1zM347 156h1v13h-1zM350 153h1v9h-1zM353 138h1v20h-1zM356 144h1v10h-1z" fill="#202058"/><path d="M3 154h1v57h-1zM6 151h1v60h-1zM9 138h1v73h-1zM12 145h1v66h-1zM15 154h1v57h-1zM18 150h1v61h-1zM21 141h1v70h-1zM24 147h1v64h-1zM27 144h1v67h-1zM30 156h1v55h-1zM33 151h1v60h-1zM36 162h1v49h-1zM39 162h1v49h-1zM42 160h1v51h-1zM45 154h1v57h-1zM48 150h1v61h-1zM51 133h1v78h-1zM54 154h1v57h-1zM57 149h1v62h-1zM60 154h1v57h-1zM63 138h1v73h-1zM66 120h1v91h-1zM69 119h1v92h-1zM72 125h1v86h-1zM75 136h1v75h-1zM78 113h1v98h-1zM81 114h1v97h-1zM84 118h1v93h-1zM87 119h1v92h-1zM90 129h1v82h-1zM93 134h1v77h-1zM96 127h1v84h-1zM99 126h1v85h-1zM102 165h1v46h-1zM105 169h1v42h-1zM108 151h1v60h-1zM111 154h1v57h-1zM114 154h1v57h-1zM117 167h1v44h-1zM123 158h1v53h-1zM126 162h1v49h-1zM129 165h1v46h-1zM132 163h1v48h-1zM135 156h1v55h-1zM138 162h1v49h-1zM141 165h1v46h-1zM144 162h1v49h-1zM147 158h1v53h-1zM150 149h1v62h-1zM153 149h1v62h-1zM156 150h1v61h-1zM159 158h1v53h-1zM162 158h1v53h-1zM165 165h1v46h-1zM168 156h1v55h-1zM171 143h1v68h-1zM174 156h1v55h-1zM177 141h1v70h-1zM180 147h1v64h-1zM183 161h1v50h-1zM186 165h1v46h-1zM189 147h1v64h-1zM192 146h1v65h-1zM195 141h1v70h-1zM198 143h1v68h-1zM201 156h1v55h-1zM204 157h1v54h-1zM207 154h1v57h-1zM210 158h1v53h-1zM213 159h1v52h-1zM216 162h1v49h-1zM219 163h1v48h-1zM222 165h1v46h-1zM225 168h1v43h-1zM228 168h1v43h-1zM231 166h1v45h-1zM234 157h1v54h-1zM237 157h1v54h-1zM240 163h1v48h-1zM243 150h1v61h-1zM246 161h1v50h-1zM249 162h1v49h-1zM252 163h1v48h-1zM255 165h1v46h-1zM258 165h1v46h-1zM261 169h1v42h-1zM264 169h1v42h-1zM267 170h1v41h-1zM270 171h1v40h-1zM273 163h1v48h-1zM276 168h1v43h-1zM279 159h1v52h-1zM282 156h1v55h-1zM285 147h1v64h-1zM288 154h1v57h-1zM291 142h1v69h-1zM294 125h1v86h-1zM297 147h1v64h-1zM300 138h1v73h-1zM303 145h1v66h-1zM306 155h1v56h-1zM309 137h1v74h-1zM312 138h1v73h-1zM315 151h1v60h-1zM318 155h1v56h-1zM321 158h1v53h-1zM324 163h1v48h-1zM327 158h1v53h-1zM330 159h1v52h-1zM333 170h1v41h-1zM336 169h1v42h-1zM339 159h1v52h-1zM342 159h1v52h-1zM345 165h1v46h-1zM348 169h1v42h-1zM351 162h1v49h-1zM354 158h1v53h-1zM357 154h1v57h-1z" fill="#780E64"/><path d="M3 138h1v16h-1zM6 134h1v17h-1zM9 127h1v11h-1zM12 138h1v7h-1zM15 141h1v13h-1zM18 133h1v17h-1zM21 126h1v15h-1zM24 134h1v13h-1zM27 112h1v32h-1zM30 136h1v20h-1zM33 139h1v12h-1zM36 144h1v18h-1zM39 148h1v14h-1zM42 148h1v12h-1zM45 138h1v16h-1zM54 144h1v10h-1zM57 138h1v11h-1zM60 135h1v19h-1zM63 123h1v15h-1zM66 115h1v5h-1zM69 110h1v9h-1zM72 112h1v13h-1zM75 129h1v7h-1zM78 103h1v10h-1zM81 113h1v1h-1zM84 113h1v5h-1zM87 113h1v6h-1zM90 118h1v11h-1zM93 123h1v11h-1zM96 115h1v12h-1zM99 102h1v24h-1zM102 155h1v10h-1zM105 150h1v19h-1zM108 143h1v8h-1zM111 137h1v17h-1zM114 139h1v15h-1zM117 150h1v17h-1zM123 146h1v12h-1zM126 148h1v14h-1zM129 149h1v16h-1zM132 157h1v6h-1zM135 155h1v1h-1zM138 144h1v18h-1zM141 148h1v17h-1zM144 155h1v7h-1zM147 154h1v4h-1zM153 142h1v7h-1zM156 138h1v12h-1zM159 138h1v20h-1zM162 142h1v16h-1zM165 144h1v21h-1zM168 144h1v12h-1zM171 132h1v11h-1zM174 139h1v17h-1zM177 134h1v7h-1zM180 129h1v18h-1zM183 147h1v14h-1zM186 146h1v19h-1zM189 137h1v10h-1zM192 134h1v12h-1zM195 131h1v10h-1zM198 133h1v10h-1zM201 144h1v12h-1zM204 141h1v16h-1zM207 147h1v7h-1zM210 139h1v19h-1zM213 146h1v13h-1zM216 156h1v6h-1zM219 153h1v10h-1zM222 158h1v7h-1zM225 160h1v8h-1zM228 150h1v18h-1zM231 150h1v16h-1zM234 151h1v6h-1zM237 143h1v14h-1zM240 153h1v10h-1zM243 135h1v15h-1zM246 138h1v23h-1zM249 141h1v21h-1zM252 145h1v18h-1zM255 146h1v19h-1zM258 150h1v15h-1zM261 156h1v13h-1zM264 153h1v16h-1zM267 157h1v13h-1zM270 153h1v18h-1zM273 149h1v14h-1zM276 155h1v13h-1zM279 146h1v13h-1zM282 151h1v5h-1zM285 135h1v12h-1zM288 135h1v19h-1zM291 109h1v33h-1zM294 103h1v22h-1zM297 122h1v25h-1zM300 117h1v21h-1zM303 125h1v20h-1zM306 145h1v10h-1zM309 132h1v5h-1zM312 134h1v4h-1zM315 139h1v12h-1zM318 143h1v12h-1zM321 150h1v8h-1zM324 153h1v10h-1zM327 144h1v14h-1zM330 145h1v14h-1zM333 155h1v15h-1zM336 157h1v12h-1zM339 141h1v18h-1zM342 141h1v18h-1zM345 149h1v16h-1zM348 156h1v13h-1zM351 153h1v9h-1zM354 138h1v20h-1zM357 144h1v10h-1z" fill="#F0F0FA"/><path d="M4 154h1v57h-1zM7 151h1v60h-1zM10 138h1v73h-1zM13 145h1v66h-1zM16 154h1v57h-1zM19 150h1v61h-1zM22 141h1v70h-1zM25 147h1v64h-1zM28 144h1v67h-1zM31 156h1v55h-1zM34 151h1v60h-1zM37 162h1v49h-1zM40 162h1v49h-1zM43 160h1v51h-1zM46 154h1v57h-1zM49 150h1v61h-1zM52 133h1v78h-1zM55 154h1v57h-1zM58 149h1v62h-1zM61 154h1v57h-1zM64 138h1v73h-1zM67 120h1v91h-1zM70 119h1v92h-1zM73 125h1v86h-1zM76 136h1v75h-1zM79 113h1v98h-1zM82 114h1v97h-1zM85 118h1v93h-1zM88 119h1v92h-1zM91 129h1v82h-1zM94 134h1v77h-1zM97 127h1v84h-1zM100 126h1v85h-1zM103 165h1v46h-1zM106 169h1v42h-1zM109 151h1v60h-1zM112 154h1v57h-1zM115 154h1v57h-1zM118 167h1v44h-1zM124 158h1v53h-1zM127 162h1v49h-1zM130 165h1v46h-1zM133 163h1v48h-1zM136 156h1v55h-1zM139 162h1v49h-1zM142 165h1v46h-1zM145 162h1v49h-1zM148 158h1v53h-1zM151 149h1v62h-1zM154 149h1v62h-1zM157 150h1v61h-1zM160 158h1v53h-1zM163 158h1v53h-1zM166 165h1v46h-1zM169 156h1v55h-1zM172 143h1v68h-1zM175 156h1v55h-1zM178 141h1v70h-1zM181 147h1v64h-1zM184 161h1v50h-1zM187 165h1v46h-1zM190 147h1v64h-1zM193 146h1v65h-1zM196 141h1v70h-1zM199 143h1v68h-1zM202 156h1v55h-1zM205 157h1v54h-1zM208 154h1v57h-1zM211 158h1v53h-1zM214 159h1v52h-1zM217 162h1v49h-1zM220 163h1v48h-1zM223 165h1v46h-1zM226 168h1v43h-1zM229 168h1v43h-1zM232 166h1v45h-1zM235 157h1v54h-1zM238 157h1v54h-1zM241 163h1v48h-1zM244 150h1v61h-1zM247 161h1v50h-1zM250 162h1v49h-1zM253 163h1v48h-1zM256 165h1v46h-1zM259 165h1v46h-1zM262 169h1v42h-1zM265 169h1v42h-1zM268 170h1v41h-1zM271 171h1v40h-1zM274 163h1v48h-1zM277 168h1v43h-1zM280 159h1v52h-1zM283 156h1v55h-1zM286 147h1v64h-1zM289 154h1v57h-1zM292 142h1v69h-1zM295 125h1v86h-1zM298 147h1v64h-1zM301 138h1v73h-1zM304 145h1v66h-1zM307 155h1v56h-1zM310 137h1v74h-1zM313 138h1v73h-1zM316 151h1v60h-1zM319 155h1v56h-1zM322 158h1v53h-1zM325 163h1v48h-1zM328 158h1v53h-1zM331 159h1v52h-1zM334 170h1v41h-1zM337 169h1v42h-1zM340 159h1v52h-1zM343 159h1v52h-1zM346 165h1v46h-1zM349 169h1v42h-1zM352 162h1v49h-1zM355 158h1v53h-1zM358 154h1v57h-1z" fill="#FCCCF2"/><path d="M0 0.5H360M0.5 0V212" stroke="#ACA899" fill="none"/><path d="M1 1.5H359M1.5 1V211" stroke="#716F64" fill="none"/><path d="M0 211.5H360M359.5 0V212" stroke="#FFFFFF" fill="none"/></svg>
<div style="position:absolute;left:398px;top:565px;width:119px;height:38px;background:#FFF;border:1px solid #1A0A0A;box-sizing:border-box;"></div>
<div style="position:absolute;left:401px;top:569px;width:14px;height:14px;background:#0000FF;border:1px solid #101030;box-sizing:border-box;"></div>
<div style="position:absolute;left:401px;top:585px;width:14px;height:14px;background:#FF0000;border:1px solid #301010;box-sizing:border-box;"></div>
<div style="position:absolute;left:416px;top:570.69px;font-family:'Liberation Sans',sans-serif;font-size:11px;line-height:11px;color:#000;font-weight:normal;white-space:nowrap;letter-spacing:-0.2px;">Tx Packet:&nbsp; 329 p/s</div>
<div style="position:absolute;left:416px;top:586.69px;font-family:'Liberation Sans',sans-serif;font-size:11px;line-height:11px;color:#000;font-weight:normal;white-space:nowrap;letter-spacing:-0.2px;">Rx Packet:&nbsp; 279 p/s</div>
<div style="position:absolute;left:773px;top:42px;width:114px;height:23px;border:1px solid #000;box-sizing:border-box;background:#ECE9D8;box-shadow:inset 1px 1px 0 #FFF, inset -1px -1px 0 #C4C1B2;"></div>
<div style="position:absolute;left:630.0px;width:400px;text-align:center;top:48.69px;font-family:'Liberation Sans',sans-serif;font-size:11px;line-height:11px;color:#000;font-weight:normal;white-space:nowrap;">OK</div>
<div style="position:absolute;left:773px;top:68px;width:114px;height:23px;border:1px solid #85837A;box-sizing:border-box;background:#ECE9D8;box-shadow:inset 1px 1px 0 #FFF, inset -1px -1px 0 #C4C1B2;"></div>
<div style="position:absolute;left:630.0px;width:400px;text-align:center;top:74.69px;font-family:'Liberation Sans',sans-serif;font-size:11px;line-height:11px;color:#000;font-weight:normal;white-space:nowrap;">Cancel</div>
<div style="position:absolute;left:773px;top:94px;width:114px;height:23px;border:1px solid #85837A;box-sizing:border-box;background:#ECE9D8;box-shadow:inset 1px 1px 0 #FFF, inset -1px -1px 0 #C4C1B2;"></div>
<div style="position:absolute;left:630.0px;width:400px;text-align:center;top:100.69px;font-family:'Liberation Sans',sans-serif;font-size:11px;line-height:11px;color:#000;font-weight:normal;white-space:nowrap;">Apply</div>
<div style="position:absolute;left:773px;top:126px;width:114px;height:23px;border:1px solid #85837A;box-sizing:border-box;background:#ECE9D8;box-shadow:inset 1px 1px 0 #FFF, inset -1px -1px 0 #C4C1B2;"></div>
<div style="position:absolute;left:630.0px;width:400px;text-align:center;top:132.69px;font-family:'Liberation Sans',sans-serif;font-size:11px;line-height:11px;color:#000;font-weight:normal;white-space:nowrap;">Disable</div>
<div style="position:absolute;left:773px;top:152px;width:114px;height:23px;border:1px solid #85837A;box-sizing:border-box;background:#ECE9D8;box-shadow:inset 1px 1px 0 #FFF, inset -1px -1px 0 #C4C1B2;"></div>
<div style="position:absolute;left:630.0px;width:400px;text-align:center;top:158.69px;font-family:'Liberation Sans',sans-serif;font-size:11px;line-height:11px;color:#000;font-weight:normal;white-space:nowrap;">Comment</div>
<div style="position:absolute;left:773px;top:184px;width:114px;height:23px;border:1px solid #85837A;box-sizing:border-box;background:#ECE9D8;box-shadow:inset 1px 1px 0 #FFF, inset -1px -1px 0 #C4C1B2;"></div>
<div style="position:absolute;left:630.0px;width:400px;text-align:center;top:190.69px;font-family:'Liberation Sans',sans-serif;font-size:11px;line-height:11px;color:#000;font-weight:normal;white-space:nowrap;">Torch</div>
<div style="position:absolute;left:773px;top:210px;width:114px;height:23px;border:1px solid #85837A;box-sizing:border-box;background:#ECE9D8;box-shadow:inset 1px 1px 0 #FFF, inset -1px -1px 0 #C4C1B2;"></div>
<div style="position:absolute;left:630.0px;width:400px;text-align:center;top:216.69px;font-family:'Liberation Sans',sans-serif;font-size:11px;line-height:11px;color:#000;font-weight:normal;white-space:nowrap;">Scan...</div>
<div style="position:absolute;left:773px;top:236px;width:114px;height:23px;border:1px solid #85837A;box-sizing:border-box;background:#ECE9D8;box-shadow:inset 1px 1px 0 #FFF, inset -1px -1px 0 #C4C1B2;"></div>
<div style="position:absolute;left:630.0px;width:400px;text-align:center;top:242.69px;font-family:'Liberation Sans',sans-serif;font-size:11px;line-height:11px;color:#000;font-weight:normal;white-space:nowrap;">Freq. Usage...</div>
<div style="position:absolute;left:773px;top:262px;width:114px;height:23px;border:1px solid #85837A;box-sizing:border-box;background:#ECE9D8;box-shadow:inset 1px 1px 0 #FFF, inset -1px -1px 0 #C4C1B2;"></div>
<div style="position:absolute;left:630.0px;width:400px;text-align:center;top:268.69px;font-family:'Liberation Sans',sans-serif;font-size:11px;line-height:11px;color:#000;font-weight:normal;white-space:nowrap;">Align...</div>
<div style="position:absolute;left:773px;top:288px;width:114px;height:23px;border:1px solid #85837A;box-sizing:border-box;background:#ECE9D8;box-shadow:inset 1px 1px 0 #FFF, inset -1px -1px 0 #C4C1B2;"></div>
<div style="position:absolute;left:630.0px;width:400px;text-align:center;top:294.69px;font-family:'Liberation Sans',sans-serif;font-size:11px;line-height:11px;color:#000;font-weight:normal;white-space:nowrap;">Sniff...</div>
<div style="position:absolute;left:773px;top:314px;width:114px;height:23px;border:1px solid #85837A;box-sizing:border-box;background:#ECE9D8;box-shadow:inset 1px 1px 0 #FFF, inset -1px -1px 0 #C4C1B2;"></div>
<div style="position:absolute;left:630.0px;width:400px;text-align:center;top:320.69px;font-family:'Liberation Sans',sans-serif;font-size:11px;line-height:11px;color:#000;font-weight:normal;white-space:nowrap;">Snooper...</div>
<div style="position:absolute;left:773px;top:346px;width:114px;height:23px;border:1px solid #85837A;box-sizing:border-box;background:#ECE9D8;box-shadow:inset 1px 1px 0 #FFF, inset -1px -1px 0 #C4C1B2;"></div>
<div style="position:absolute;left:630.0px;width:400px;text-align:center;top:352.69px;font-family:'Liberation Sans',sans-serif;font-size:11px;line-height:11px;color:#000;font-weight:normal;white-space:nowrap;">Reset Configuration</div>
<div style="position:absolute;left:773px;top:378px;width:114px;height:23px;border:1px solid #85837A;box-sizing:border-box;background:#ECE9D8;box-shadow:inset 1px 1px 0 #FFF, inset -1px -1px 0 #C4C1B2;"></div>
<div style="position:absolute;left:630.0px;width:400px;text-align:center;top:384.69px;font-family:'Liberation Sans',sans-serif;font-size:11px;line-height:11px;color:#000;font-weight:normal;white-space:nowrap;">Simple Mode</div>
<div style="position:absolute;left:387px;top:618px;width:122px;height:19px;border-top:1px solid #ACA899;border-left:1px solid #ACA899;box-sizing:border-box;border-right:1px solid #FFF;border-bottom:1px solid #FFF;"></div>
<div style="position:absolute;left:388px;top:622.69px;font-family:'Liberation Sans',sans-serif;font-size:11px;line-height:11px;color:#ACA899;font-weight:normal;white-space:nowrap;">disabled</div>
<div style="position:absolute;left:511px;top:618px;width:123px;height:19px;border-top:1px solid #ACA899;border-left:1px solid #ACA899;box-sizing:border-box;border-right:1px solid #FFF;border-bottom:1px solid #FFF;"></div>
<div style="position:absolute;left:512px;top:622.69px;font-family:'Liberation Sans',sans-serif;font-size:11px;line-height:11px;color:#000;font-weight:normal;white-space:nowrap;">running</div>
<div style="position:absolute;left:636px;top:618px;width:124px;height:19px;border-top:1px solid #ACA899;border-left:1px solid #ACA899;box-sizing:border-box;border-right:1px solid #FFF;border-bottom:1px solid #FFF;"></div>
<div style="position:absolute;left:637px;top:622.69px;font-family:'Liberation Sans',sans-serif;font-size:11px;line-height:11px;color:#ACA899;font-weight:normal;white-space:nowrap;">slave</div>
<div style="position:absolute;left:761px;top:618px;width:128px;height:19px;border-top:1px solid #ACA899;border-left:1px solid #ACA899;box-sizing:border-box;border-right:1px solid #FFF;border-bottom:1px solid #FFF;"></div>
<div style="position:absolute;left:762px;top:622.69px;font-family:'Liberation Sans',sans-serif;font-size:11px;line-height:11px;color:#000;font-weight:normal;white-space:nowrap;">connected to ess</div>
<div style="position:absolute;left:382px;top:637px;width:513px;height:4px;background:#0D46D2;"></div>
<div style="position:absolute;left:382px;top:640px;width:513px;height:1px;background:#0A2A9A;"></div></body></html>
